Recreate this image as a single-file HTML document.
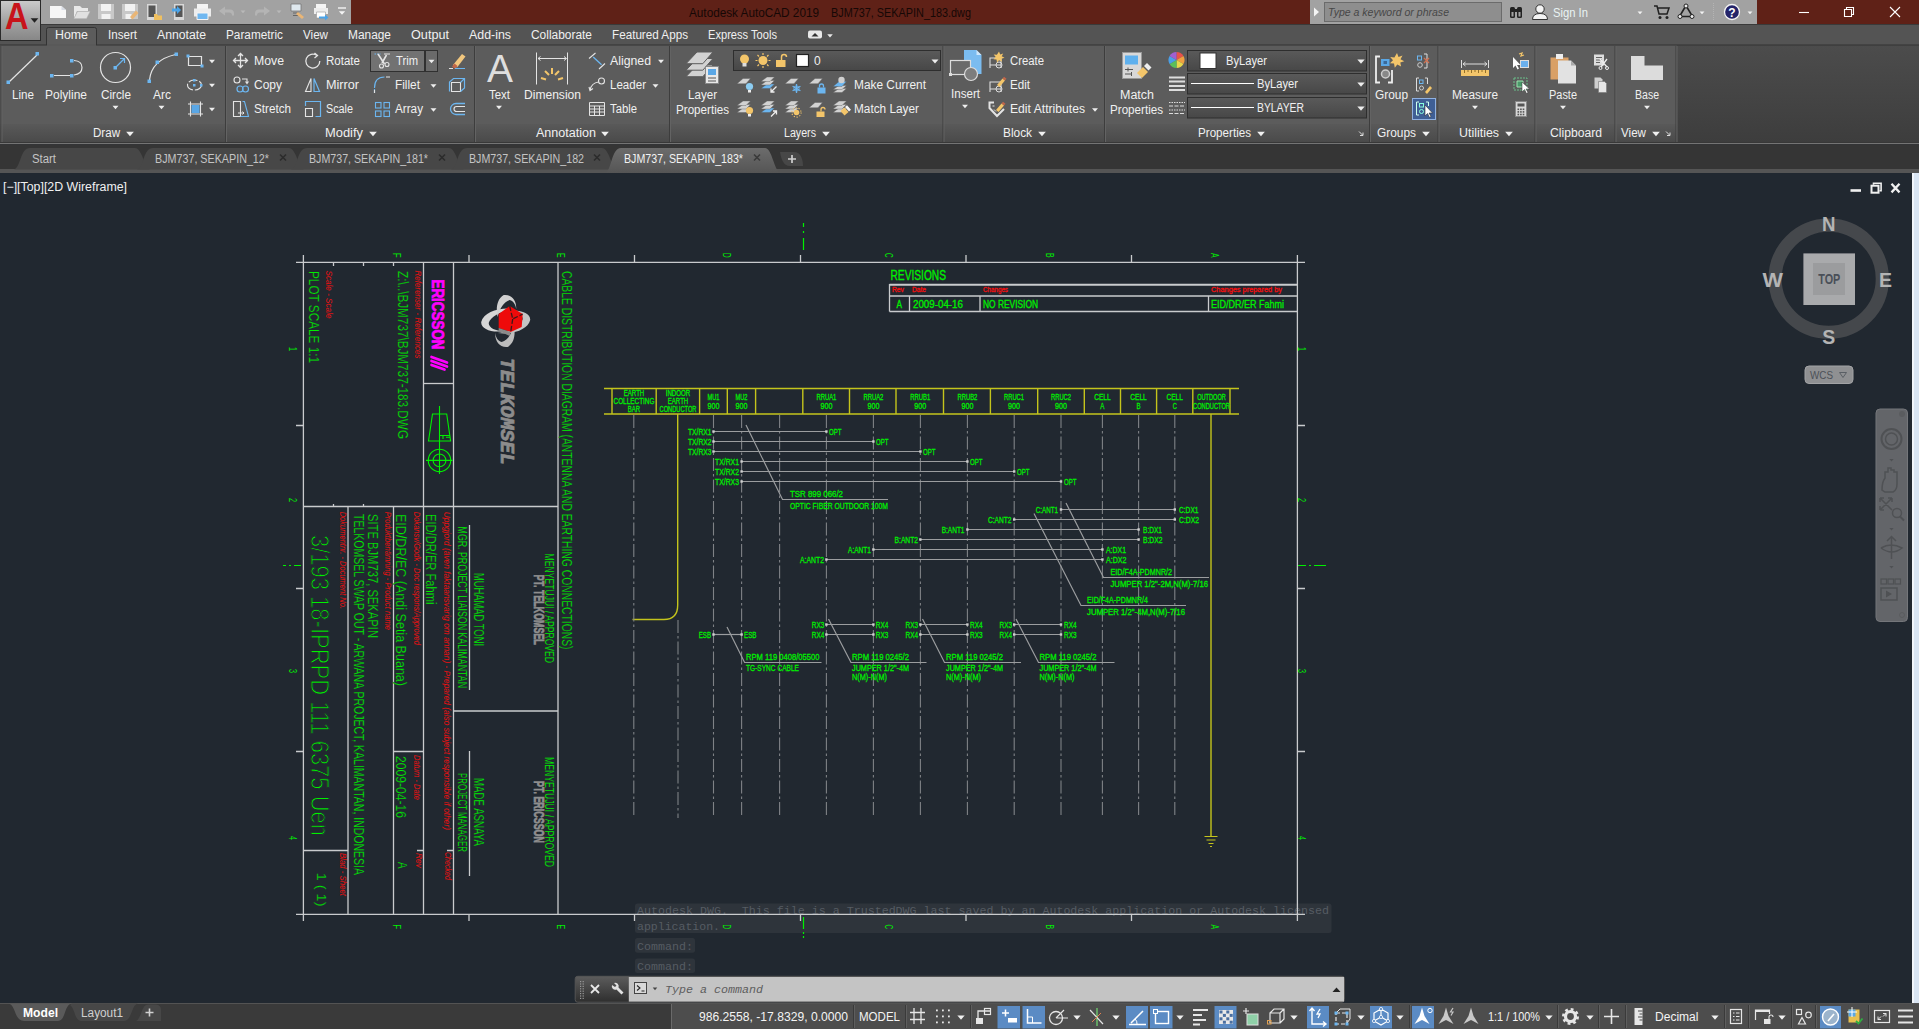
<!DOCTYPE html>
<html lang="en"><head><meta charset="utf-8"><title>Autodesk AutoCAD 2019 - BJM737, SEKAPIN_183.dwg</title>
<style>
html,body{margin:0;padding:0;}
body{width:1919px;height:1029px;overflow:hidden;background:#212830;position:relative;font-family:"Liberation Sans",Arial,sans-serif;}
#top,#view,#status{position:absolute;left:0;}
#top{top:0;width:1919px;height:173px;}
#view{top:173px;width:1919px;height:830px;background:#212830;}
#status{top:1002px;width:1919px;height:27px;}
#scroll{position:absolute;left:1912px;top:173px;width:7px;height:830px;background:#d9e5f3;border-left:2px solid #f2f6fb;box-sizing:border-box;}
svg{display:block;position:absolute;left:0;top:0;}
text{white-space:pre;}
</style></head><body>
<div id="view">
<svg width="1919" height="830" viewBox="0 173 1919 830">
<g font-family='"Liberation Mono","DejaVu Sans Mono",monospace'>
<rect x="635" y="903.5" width="696.5" height="29.5" fill="#2e343b" rx="2.5"/>
<rect x="635" y="938" width="60" height="14.7" fill="#2e343b" rx="2.5"/>
<rect x="635" y="958.5" width="60" height="14.5" fill="#2e343b" rx="2.5"/>
<text x="637" y="914" font-size="11.8" fill="#565c63" textLength="692" lengthAdjust="spacingAndGlyphs">Autodesk DWG.  This file is a TrustedDWG last saved by an Autodesk application or Autodesk licensed</text>
<text x="637" y="929.6" font-size="11.8" fill="#565c63" textLength="83" lengthAdjust="spacingAndGlyphs">application.</text>
<text x="637" y="949.7" font-size="11.8" fill="#565c63" textLength="56" lengthAdjust="spacingAndGlyphs">Command:</text>
<text x="637" y="969.9" font-size="11.8" fill="#565c63" textLength="56" lengthAdjust="spacingAndGlyphs">Command:</text>
</g>
<g font-family='"Liberation Sans","DejaVu Sans",sans-serif' shape-rendering="auto">
<g stroke="#c9cbcd" stroke-width="1.3" fill="none">
<path d="M296 262.4 H1305 M296 914.3 H1305 M303.4 255 V921 M1297.4 255 V921"/>
<path d="M469 255 V262.4 M469 914.3 V921"/>
<path d="M634.5 255 V262.4 M634.5 914.3 V921"/>
<path d="M800.5 255 V262.4 M800.5 914.3 V921"/>
<path d="M966 255 V262.4 M966 914.3 V921"/>
<path d="M1131.5 255 V262.4 M1131.5 914.3 V921"/>
<path d="M296 425.5 H303.4 M1297.4 425.5 H1305"/>
<path d="M296 588.5 H303.4 M1297.4 588.5 H1305"/>
<path d="M296 751.5 H303.4 M1297.4 751.5 H1305"/>
<path d="M423.5 262.4 V914.3 M453.5 262.4 V914.3 M558 262.4 V914.3"/>
<path d="M303.4 506.5 H558"/>
<path d="M423.5 383.5 H453.5"/>
<path d="M348 506.5 V914.3 M393.5 506.5 V914.3"/>
<path d="M453.5 711 H558 M393.5 751.5 H423.5 M303.4 850.5 H348 M417 850.5 H423.5 M447 850.5 H453.5"/>
<path d="M333.5 262.4 V266 M363.5 262.4 V266 M393.5 262.4 V266 M333.5 506.5 V504 M363.5 506.5 V504"/>
<path d="M469.5 525 V690 M469.5 751 V876"/>
<path d="M889.5 284.4 H1297.4 M889.5 285.2 H1297.4 M889.5 296 H1297.4 M889.5 311.5 H1297.4 M889.5 284 V311.5 M909.5 296 V311.5 M980 296 V311.5 M1208.5 296 V311.5"/>
</g>
<text font-size="11.5" fill="#00f000" textLength="4.6" lengthAdjust="spacingAndGlyphs" transform="translate(392.8,253) rotate(90)">F</text>
<text font-size="11.5" fill="#00f000" textLength="4.6" lengthAdjust="spacingAndGlyphs" transform="translate(392.8,924.5) rotate(90)">F</text>
<text font-size="11.5" fill="#00f000" textLength="4.6" lengthAdjust="spacingAndGlyphs" transform="translate(557.4,253) rotate(90)">E</text>
<text font-size="11.5" fill="#00f000" textLength="4.6" lengthAdjust="spacingAndGlyphs" transform="translate(557.4,924.5) rotate(90)">E</text>
<text font-size="11.5" fill="#00f000" textLength="4.6" lengthAdjust="spacingAndGlyphs" transform="translate(722.8,253) rotate(90)">D</text>
<text font-size="11.5" fill="#00f000" textLength="4.6" lengthAdjust="spacingAndGlyphs" transform="translate(722.8,924.5) rotate(90)">D</text>
<text font-size="11.5" fill="#00f000" textLength="4.6" lengthAdjust="spacingAndGlyphs" transform="translate(885.3,253) rotate(90)">C</text>
<text font-size="11.5" fill="#00f000" textLength="4.6" lengthAdjust="spacingAndGlyphs" transform="translate(885.3,924.5) rotate(90)">C</text>
<text font-size="11.5" fill="#00f000" textLength="4.6" lengthAdjust="spacingAndGlyphs" transform="translate(1046,253) rotate(90)">B</text>
<text font-size="11.5" fill="#00f000" textLength="4.6" lengthAdjust="spacingAndGlyphs" transform="translate(1046,924.5) rotate(90)">B</text>
<text font-size="11.5" fill="#00f000" textLength="4.6" lengthAdjust="spacingAndGlyphs" transform="translate(1210.5,253) rotate(90)">A</text>
<text font-size="11.5" fill="#00f000" textLength="4.6" lengthAdjust="spacingAndGlyphs" transform="translate(1210.5,924.5) rotate(90)">A</text>
<text font-size="11.5" fill="#00f000" textLength="4" lengthAdjust="spacingAndGlyphs" transform="translate(288.5,347) rotate(90)">1</text>
<text font-size="11.5" fill="#00f000" textLength="4" lengthAdjust="spacingAndGlyphs" transform="translate(1298,347) rotate(90)">1</text>
<text font-size="11.5" fill="#00f000" textLength="4" lengthAdjust="spacingAndGlyphs" transform="translate(288.5,498) rotate(90)">2</text>
<text font-size="11.5" fill="#00f000" textLength="4" lengthAdjust="spacingAndGlyphs" transform="translate(1298,498) rotate(90)">2</text>
<text font-size="11.5" fill="#00f000" textLength="4" lengthAdjust="spacingAndGlyphs" transform="translate(288.5,669) rotate(90)">3</text>
<text font-size="11.5" fill="#00f000" textLength="4" lengthAdjust="spacingAndGlyphs" transform="translate(1298,669) rotate(90)">3</text>
<text font-size="11.5" fill="#00f000" textLength="4" lengthAdjust="spacingAndGlyphs" transform="translate(288.5,836) rotate(90)">4</text>
<text font-size="11.5" fill="#00f000" textLength="4" lengthAdjust="spacingAndGlyphs" transform="translate(1298,836) rotate(90)">4</text>
<g stroke="#00f000" stroke-width="1.2">
<path d="M803.5 223 V227 M803.5 231 V233 M803.5 238 V250"/>
<path d="M803.5 917 V929 M803.5 932 V934 M803.5 936 V938"/>
<path d="M283 565.5 H286 M289 565.5 H291 M294 565.5 H301"/>
<path d="M1298 565.5 H1306 M1309 565.5 H1311 M1314 565.5 H1326"/>
</g>
<text font-size="14.5" fill="#00f000" textLength="92" lengthAdjust="spacingAndGlyphs" transform="translate(308.6,271) rotate(90)" stroke="#212830" stroke-width="0.25">PLOT SCALE 1:1</text>
<text font-size="9" fill="#f01010" textLength="48.0" lengthAdjust="spacingAndGlyphs" font-style="italic" transform="translate(326.2,270.5) rotate(90)">Scale - Scale</text>
<text font-size="14.5" fill="#00f000" textLength="168" lengthAdjust="spacingAndGlyphs" transform="translate(398.4,271) rotate(90)" stroke="#212830" stroke-width="0.25">Z:\..\BJM737\BJM737-183.DWG</text>
<text font-size="9" fill="#f01010" textLength="88.0" lengthAdjust="spacingAndGlyphs" font-style="italic" transform="translate(414.8,270.5) rotate(90)">Referenser - References</text>
<text font-size="16" fill="#ff00ff" textLength="70.0" lengthAdjust="spacingAndGlyphs" font-weight="bold" transform="translate(431.6,279.5) rotate(90)" stroke="#ff00ff" stroke-width="0.7">ERICSSON</text>
<g stroke="#ff00ff" stroke-width="2.7" stroke-linecap="round"><path d="M431.5 357 L447 362.5 M431.5 361 L447 366.5 M431.5 365 L444.5 369.5"/></g>
<g stroke="#00f000" stroke-width="1.1" fill="none">
<path d="M439.5 406 V474 M428.5 441 L432.5 414 H446.7 L450.6 441 Z M440 435.5 H449.5 M443 435.5 V439 M446 437.2 H449.5 M426 460.4 H452.5"/>
<circle cx="439.5" cy="460.4" r="11.2"/><circle cx="439.5" cy="460.4" r="6.4"/>
</g>
<g transform="translate(505.7,321)">
<path d="M-24.5 1 C-22 -9 -6 -14 8 -12 C-4 -10 -15 -5 -17 2 C-17 7 -10 10 -2 10 C-14 12 -25 8 -24.500 1 Z" fill="#d6d6d6"/>
<path d="M24.5 -1 C22 9 6 14 -8 12 C4 10 15 5 17 -2 C17 -7 10 -10 2 -10 C14 -12 25 -8 24.500 -1 Z" fill="#c4c4c4"/>
<path d="M-2 -26 C-9 -22 -10 -12 -8 -4 C-6 -13 -2 -19 4 -21 C8 -20 10 -16 10.500 -12 C11 -20 6 -27 -2 -26 Z" fill="#d0d0d0"/>
<path d="M2 26 C9 22 10 12 8 4 C6 13 2 19 -4 21 C-8 20 -10 16 -10.500 12 C-11 20 -6 27 2 26 Z" fill="#bdbdbd"/>
<path d="M-7 -7 L4 -15 L17 -7 L16 6 L5 11 L-7 7 Z" fill="#ee0a0a"/>
<path d="M-7 7 L5 11 L4 15 L-7 10 Z" fill="#8a8a8a"/>
<path d="M4 -15 L7 -2 L17 -7 M7 -2 L5 11" stroke="#3a1a1a" stroke-width="1.3" fill="none" stroke-dasharray="5 2"/>
</g>
<text font-size="20" fill="#8c8c8c" textLength="107" lengthAdjust="spacingAndGlyphs" font-weight="bold" font-style="italic" font-family='"Liberation Mono",monospace' transform="translate(500.6,358) rotate(90)" stroke="#8c8c8c" stroke-width="0.7">TELKOMSEL</text>
<text font-size="14.5" fill="#00f000" textLength="378.5" lengthAdjust="spacingAndGlyphs" transform="translate(561.6,271) rotate(90)" stroke="#212830" stroke-width="0.25">CABLE DISTRIBUTION DIAGRAM (ANTENNA AND EARTHING CONNECTIONS)</text>
<text font-size="25" fill="#00f000" textLength="301" lengthAdjust="spacingAndGlyphs" transform="translate(311.3,535) rotate(90)" stroke="#212830" stroke-width="1.0">3/193 18-IPRPD 111 6375 Uen</text>
<text font-size="9" fill="#f01010" textLength="97.3" lengthAdjust="spacingAndGlyphs" font-style="italic" transform="translate(340,511.7) rotate(90)">Dokumentnr. - Document No.</text>
<text font-size="14.5" fill="#00f000" textLength="361" lengthAdjust="spacingAndGlyphs" transform="translate(353.9,514) rotate(90)" stroke="#212830" stroke-width="0.25">TELKOMSEL SWAP OUT - ARWANA PROJECT, KALIMANTAN, INDONESIA</text>
<text font-size="14.5" fill="#00f000" textLength="124" lengthAdjust="spacingAndGlyphs" transform="translate(367.9,514) rotate(90)" stroke="#212830" stroke-width="0.25">SITE BJM737, SEKAPIN</text>
<text font-size="9" fill="#f01010" textLength="118.3" lengthAdjust="spacingAndGlyphs" font-style="italic" transform="translate(384.6,511.7) rotate(90)">Produktbenämning - Product name</text>
<text font-size="15" fill="#00f000" textLength="172" lengthAdjust="spacingAndGlyphs" transform="translate(395.5,514) rotate(90)" stroke="#212830" stroke-width="0.25">EID/DR/EC (Andi Setia Buana)</text>
<text font-size="9" fill="#f01010" textLength="133.3" lengthAdjust="spacingAndGlyphs" font-style="italic" transform="translate(414.4,511.7) rotate(90)">Dokansv/Godk - Doc respons/Approved</text>
<text font-size="15" fill="#00f000" textLength="90.5" lengthAdjust="spacingAndGlyphs" transform="translate(425.7,514) rotate(90)" stroke="#212830" stroke-width="0.25">EID/DR/ER Fahmi</text>
<text font-size="9" fill="#f01010" textLength="318.3" lengthAdjust="spacingAndGlyphs" font-style="italic" transform="translate(443.5,511.7) rotate(90)">Uppgjord (även faktaansvarig om annan) - Prepared (also subject responsible if other)</text>
<text font-size="12" fill="#00f000" textLength="161.4" lengthAdjust="spacingAndGlyphs" transform="translate(458.4,526.6) rotate(90)" stroke="#212830" stroke-width="0.15">MGR. PROJECT LIAISON KALIMANTAN</text>
<text font-size="14.2" fill="#00f000" textLength="73" lengthAdjust="spacingAndGlyphs" transform="translate(473.8,573) rotate(90)" stroke="#212830" stroke-width="0.25">MUHAMAD TONI</text>
<text font-size="12.7" fill="#00f000" textLength="109.4" lengthAdjust="spacingAndGlyphs" transform="translate(544.6,553.6) rotate(90)" stroke="#212830" stroke-width="0.15">MENYETUJUI / APPROVED</text>
<text font-size="14" fill="#8e8e8e" textLength="70.1" lengthAdjust="spacingAndGlyphs" font-weight="bold" transform="translate(533.8,574.7) rotate(90)" stroke="#8e8e8e" stroke-width="0.7">PT. TELKOMSEL</text>
<text font-size="9" fill="#f01010" textLength="45" lengthAdjust="spacingAndGlyphs" font-style="italic" transform="translate(414.4,755) rotate(90)">Datum - Date</text>
<text font-size="15" fill="#00f000" textLength="62" lengthAdjust="spacingAndGlyphs" transform="translate(395.5,756) rotate(90)" stroke="#212830" stroke-width="0.25">2009-04-16</text>
<text font-size="9" fill="#f01010" textLength="15" lengthAdjust="spacingAndGlyphs" font-style="italic" transform="translate(416,853) rotate(90)">Rev</text>
<text font-size="13" fill="#00f000" textLength="6.5" lengthAdjust="spacingAndGlyphs" transform="translate(397.5,862) rotate(90)" stroke="#212830" stroke-width="0.25">A</text>
<text font-size="9" fill="#f01010" textLength="28" lengthAdjust="spacingAndGlyphs" font-style="italic" transform="translate(445,852) rotate(90)">Checked</text>
<text font-size="9" fill="#f01010" textLength="43" lengthAdjust="spacingAndGlyphs" font-style="italic" transform="translate(340,853) rotate(90)">Blad - Sheet</text>
<text font-size="13.5" fill="#00f000" textLength="33.8" lengthAdjust="spacingAndGlyphs" transform="translate(316.5,872.7) rotate(90)" stroke="#212830" stroke-width="0.25">1 ( 1)</text>
<text font-size="12" fill="#00f000" textLength="79" lengthAdjust="spacingAndGlyphs" transform="translate(458.4,773) rotate(90)" stroke="#212830" stroke-width="0.15">PROJECT MANAGER</text>
<text font-size="14.2" fill="#00f000" textLength="68" lengthAdjust="spacingAndGlyphs" transform="translate(473.8,778) rotate(90)" stroke="#212830" stroke-width="0.25">MADE ASNAYA</text>
<text font-size="12.7" fill="#00f000" textLength="110" lengthAdjust="spacingAndGlyphs" transform="translate(544.6,757) rotate(90)" stroke="#212830" stroke-width="0.15">MENYETUJUI / APPROVED</text>
<text font-size="14" fill="#8e8e8e" textLength="62" lengthAdjust="spacingAndGlyphs" font-weight="bold" transform="translate(533.8,781) rotate(90)" stroke="#8e8e8e" stroke-width="0.7">PT. ERICSSON</text>
<text x="890.5" y="280.01" font-size="14" fill="#00f000" textLength="55.5" lengthAdjust="spacingAndGlyphs" stroke="#00f000" stroke-width="0.3">REVISIONS</text>
<text x="892" y="292.41" font-size="7" fill="#f01010" textLength="12" lengthAdjust="spacingAndGlyphs" stroke="#f01010" stroke-width="0.3">Rev</text>
<text x="912" y="292.41" font-size="7" fill="#f01010" textLength="14" lengthAdjust="spacingAndGlyphs" stroke="#f01010" stroke-width="0.3">Date</text>
<text x="983" y="292.41" font-size="7" fill="#f01010" textLength="25" lengthAdjust="spacingAndGlyphs" stroke="#f01010" stroke-width="0.3">Changes</text>
<text x="1211" y="292.41" font-size="7" fill="#f01010" textLength="71" lengthAdjust="spacingAndGlyphs" stroke="#f01010" stroke-width="0.3">Changes prepared by</text>
<text x="896.5" y="307.94" font-size="11" fill="#00f000" textLength="5.5" lengthAdjust="spacingAndGlyphs" stroke="#00f000" stroke-width="0.3">A</text>
<text x="913" y="307.94" font-size="11" fill="#00f000" textLength="50" lengthAdjust="spacingAndGlyphs" stroke="#00f000" stroke-width="0.3">2009-04-16</text>
<text x="983" y="307.94" font-size="11" fill="#00f000" textLength="55" lengthAdjust="spacingAndGlyphs" stroke="#00f000" stroke-width="0.3">NO REVISION</text>
<text x="1211" y="307.94" font-size="11" fill="#00f000" textLength="73" lengthAdjust="spacingAndGlyphs" stroke="#00f000" stroke-width="0.3">EID/DR/ER Fahmi</text>
<g stroke="#c4c41c" stroke-width="1.4" fill="none">
<path d="M604 388.5 H1239 M604 414 H1239"/>
<path d="M612 388.5 V414 M656.2 388.5 V414 M699.6 388.5 V414 M727.3 388.5 V414 M755.6 388.5 V414 M802.8 388.5 V414 M849.5 388.5 V414 M896 388.5 V414 M943.5 388.5 V414 M990.4 388.5 V414 M1037.7 388.5 V414 M1084.3 388.5 V414 M1120.5 388.5 V414 M1156.6 388.5 V414 M1192.8 388.5 V414 M1230 388.5 V414"/>
<path d="M1211 414 V836"/>
<path d="M677.7 414 V605 Q677.7 619.5 664 619.5 H632.5"/>
<path d="M1204.5 836.5 H1217.5 M1206.5 840 H1215.5 M1208.5 843.5 H1213.5 M1210 846.5 H1212" stroke-width="1.2"/>
</g>
<text x="623.75" y="395.72" font-size="9" fill="#00f000" textLength="20.5" lengthAdjust="spacingAndGlyphs" stroke="#00f000" stroke-width="0.3">EARTH</text>
<text x="613.5" y="403.72" font-size="9" fill="#00f000" textLength="41.0" lengthAdjust="spacingAndGlyphs" stroke="#00f000" stroke-width="0.3">COLLECTING</text>
<text x="627.85" y="411.72" font-size="9" fill="#00f000" textLength="12.3" lengthAdjust="spacingAndGlyphs" stroke="#00f000" stroke-width="0.3">BAR</text>
<text x="665.7" y="395.72" font-size="9" fill="#00f000" textLength="24.6" lengthAdjust="spacingAndGlyphs" stroke="#00f000" stroke-width="0.3">INDOOR</text>
<text x="667.75" y="403.72" font-size="9" fill="#00f000" textLength="20.5" lengthAdjust="spacingAndGlyphs" stroke="#00f000" stroke-width="0.3">EARTH</text>
<text x="659.55" y="411.72" font-size="9" fill="#00f000" textLength="36.9" lengthAdjust="spacingAndGlyphs" stroke="#00f000" stroke-width="0.3">CONDUCTOR</text>
<text x="707.5" y="400.22" font-size="9" fill="#00f000" textLength="12.0" lengthAdjust="spacingAndGlyphs" stroke="#00f000" stroke-width="0.3">MU1</text>
<text x="707.5" y="408.72" font-size="9" fill="#00f000" textLength="12.0" lengthAdjust="spacingAndGlyphs" stroke="#00f000" stroke-width="0.3">900</text>
<text x="735.5" y="400.22" font-size="9" fill="#00f000" textLength="12.0" lengthAdjust="spacingAndGlyphs" stroke="#00f000" stroke-width="0.3">MU2</text>
<text x="735.5" y="408.72" font-size="9" fill="#00f000" textLength="12.0" lengthAdjust="spacingAndGlyphs" stroke="#00f000" stroke-width="0.3">900</text>
<text x="816.4" y="400.22" font-size="9" fill="#00f000" textLength="20.0" lengthAdjust="spacingAndGlyphs" stroke="#00f000" stroke-width="0.3">RRUA1</text>
<text x="820.4" y="408.72" font-size="9" fill="#00f000" textLength="12.0" lengthAdjust="spacingAndGlyphs" stroke="#00f000" stroke-width="0.3">900</text>
<text x="863.4" y="400.22" font-size="9" fill="#00f000" textLength="20.0" lengthAdjust="spacingAndGlyphs" stroke="#00f000" stroke-width="0.3">RRUA2</text>
<text x="867.4" y="408.72" font-size="9" fill="#00f000" textLength="12.0" lengthAdjust="spacingAndGlyphs" stroke="#00f000" stroke-width="0.3">900</text>
<text x="910.3" y="400.22" font-size="9" fill="#00f000" textLength="20.0" lengthAdjust="spacingAndGlyphs" stroke="#00f000" stroke-width="0.3">RRUB1</text>
<text x="914.3" y="408.72" font-size="9" fill="#00f000" textLength="12.0" lengthAdjust="spacingAndGlyphs" stroke="#00f000" stroke-width="0.3">900</text>
<text x="957.4" y="400.22" font-size="9" fill="#00f000" textLength="20.0" lengthAdjust="spacingAndGlyphs" stroke="#00f000" stroke-width="0.3">RRUB2</text>
<text x="961.4" y="408.72" font-size="9" fill="#00f000" textLength="12.0" lengthAdjust="spacingAndGlyphs" stroke="#00f000" stroke-width="0.3">900</text>
<text x="1004.0" y="400.22" font-size="9" fill="#00f000" textLength="20.0" lengthAdjust="spacingAndGlyphs" stroke="#00f000" stroke-width="0.3">RRUC1</text>
<text x="1008.0" y="408.72" font-size="9" fill="#00f000" textLength="12.0" lengthAdjust="spacingAndGlyphs" stroke="#00f000" stroke-width="0.3">900</text>
<text x="1051.0" y="400.22" font-size="9" fill="#00f000" textLength="20.0" lengthAdjust="spacingAndGlyphs" stroke="#00f000" stroke-width="0.3">RRUC2</text>
<text x="1055.0" y="408.72" font-size="9" fill="#00f000" textLength="12.0" lengthAdjust="spacingAndGlyphs" stroke="#00f000" stroke-width="0.3">900</text>
<text x="1094.2" y="400.4" font-size="9.5" fill="#00f000" textLength="16.4" lengthAdjust="spacingAndGlyphs" stroke="#00f000" stroke-width="0.3">CELL</text>
<text x="1100.35" y="408.9" font-size="9.5" fill="#00f000" textLength="4.1" lengthAdjust="spacingAndGlyphs" stroke="#00f000" stroke-width="0.3">A</text>
<text x="1130.3" y="400.4" font-size="9.5" fill="#00f000" textLength="16.4" lengthAdjust="spacingAndGlyphs" stroke="#00f000" stroke-width="0.3">CELL</text>
<text x="1136.45" y="408.9" font-size="9.5" fill="#00f000" textLength="4.1" lengthAdjust="spacingAndGlyphs" stroke="#00f000" stroke-width="0.3">B</text>
<text x="1166.5" y="400.4" font-size="9.5" fill="#00f000" textLength="16.4" lengthAdjust="spacingAndGlyphs" stroke="#00f000" stroke-width="0.3">CELL</text>
<text x="1172.65" y="408.9" font-size="9.5" fill="#00f000" textLength="4.1" lengthAdjust="spacingAndGlyphs" stroke="#00f000" stroke-width="0.3">C</text>
<text x="1197.15" y="400.22" font-size="9" fill="#00f000" textLength="28.7" lengthAdjust="spacingAndGlyphs" stroke="#00f000" stroke-width="0.3">OUTDOOR</text>
<text x="1193.05" y="408.72" font-size="9" fill="#00f000" textLength="36.9" lengthAdjust="spacingAndGlyphs" stroke="#00f000" stroke-width="0.3">CONDUCTOR</text>
<g stroke="#7f8286" stroke-width="1.1" stroke-dasharray="13 3 2.5 3" fill="none">
<path d="M633.8 415 V818"/>
<path d="M678 620 V818"/>
<path d="M713.5 415 V818"/>
<path d="M741.6 415 V818"/>
<path d="M779.6 415 V818"/>
<path d="M826.4 415 V818"/>
<path d="M873.4 415 V818"/>
<path d="M920.4 415 V818"/>
<path d="M967.4 415 V818"/>
<path d="M1014.2 415 V818"/>
<path d="M1061 415 V818"/>
<path d="M1102.4 415 V818"/>
<path d="M1138.6 415 V818"/>
<path d="M1174.8 415 V818"/>
</g>
<g stroke="#9b9d9f" stroke-width="1.2" fill="none">
<path d="M713.5 431.5 H826.4"/>
<path d="M713.5 441.5 H873.4"/>
<path d="M713.5 451.5 H920.4"/>
<path d="M741.6 461.5 H967.4"/>
<path d="M741.6 471.5 H1014.2"/>
<path d="M741.6 481.5 H1061"/>
<path d="M1061 509.5 H1174.8"/>
<path d="M1014.2 519.5 H1174.8"/>
<path d="M967.4 529.5 H1138.6"/>
<path d="M920.4 539.5 H1138.6"/>
<path d="M873.4 549.5 H1102.4"/>
<path d="M826.4 559.5 H1102.4"/>
<path d="M826.4 624.5 H873.4"/>
<path d="M826.4 634.5 H873.4"/>
<path d="M920.4 624.5 H967.4"/>
<path d="M920.4 634.5 H967.4"/>
<path d="M1014.2 624.5 H1061"/>
<path d="M1014.2 634.5 H1061"/>
<path d="M713.5 634.5 H741.6"/>
<path d="M746 425 L782.5 499.5 H888"/>
<path d="M1066 503 L1103.5 577.5 H1209"/>
<path d="M1034 513.5 L1081 605.5 H1186"/>
<path d="M727 627 L744.6 662.5 H821.5"/>
<path d="M828.5 619 L851 662.5 H926.5"/>
<path d="M922.5 619 L944.5 662.5 H1021"/>
<path d="M1016 619 L1038.5 662.5 H1114.5"/>
</g>
<g fill="#d0d0d0">
<rect x="712.3" y="430.3" width="2.4" height="2.4"/><rect x="825.1999999999999" y="430.3" width="2.4" height="2.4"/>
<rect x="712.3" y="440.3" width="2.4" height="2.4"/><rect x="872.1999999999999" y="440.3" width="2.4" height="2.4"/>
<rect x="712.3" y="450.3" width="2.4" height="2.4"/><rect x="919.1999999999999" y="450.3" width="2.4" height="2.4"/>
<rect x="740.4" y="460.3" width="2.4" height="2.4"/><rect x="966.1999999999999" y="460.3" width="2.4" height="2.4"/>
<rect x="740.4" y="470.3" width="2.4" height="2.4"/><rect x="1013.0" y="470.3" width="2.4" height="2.4"/>
<rect x="740.4" y="480.3" width="2.4" height="2.4"/><rect x="1059.8" y="480.3" width="2.4" height="2.4"/>
<rect x="1059.8" y="508.3" width="2.4" height="2.4"/><rect x="1173.6" y="508.3" width="2.4" height="2.4"/>
<rect x="1013.0" y="518.3" width="2.4" height="2.4"/><rect x="1173.6" y="518.3" width="2.4" height="2.4"/>
<rect x="966.1999999999999" y="528.3" width="2.4" height="2.4"/><rect x="1137.3999999999999" y="528.3" width="2.4" height="2.4"/>
<rect x="919.1999999999999" y="538.3" width="2.4" height="2.4"/><rect x="1137.3999999999999" y="538.3" width="2.4" height="2.4"/>
<rect x="872.1999999999999" y="548.3" width="2.4" height="2.4"/><rect x="1101.2" y="548.3" width="2.4" height="2.4"/>
<rect x="825.1999999999999" y="558.3" width="2.4" height="2.4"/><rect x="1101.2" y="558.3" width="2.4" height="2.4"/>
<rect x="825.1999999999999" y="623.3" width="2.4" height="2.4"/><rect x="872.1999999999999" y="623.3" width="2.4" height="2.4"/>
<rect x="825.1999999999999" y="633.3" width="2.4" height="2.4"/><rect x="872.1999999999999" y="633.3" width="2.4" height="2.4"/>
<rect x="919.1999999999999" y="623.3" width="2.4" height="2.4"/><rect x="966.1999999999999" y="623.3" width="2.4" height="2.4"/>
<rect x="919.1999999999999" y="633.3" width="2.4" height="2.4"/><rect x="966.1999999999999" y="633.3" width="2.4" height="2.4"/>
<rect x="1013.0" y="623.3" width="2.4" height="2.4"/><rect x="1059.8" y="623.3" width="2.4" height="2.4"/>
<rect x="1013.0" y="633.3" width="2.4" height="2.4"/><rect x="1059.8" y="633.3" width="2.4" height="2.4"/>
<rect x="712.3" y="633.3" width="2.4" height="2.4"/><rect x="740.4" y="633.3" width="2.4" height="2.4"/>
</g>
<text x="688" y="434.94" font-size="9.6" fill="#00f000" textLength="23.5" lengthAdjust="spacingAndGlyphs" stroke="#00f000" stroke-width="0.3">TX/RX1</text>
<text x="688" y="444.94" font-size="9.6" fill="#00f000" textLength="23.5" lengthAdjust="spacingAndGlyphs" stroke="#00f000" stroke-width="0.3">TX/RX2</text>
<text x="688" y="454.94" font-size="9.6" fill="#00f000" textLength="23.5" lengthAdjust="spacingAndGlyphs" stroke="#00f000" stroke-width="0.3">TX/RX3</text>
<text x="715" y="464.94" font-size="9.6" fill="#00f000" textLength="24" lengthAdjust="spacingAndGlyphs" stroke="#00f000" stroke-width="0.3">TX/RX1</text>
<text x="715" y="474.94" font-size="9.6" fill="#00f000" textLength="24" lengthAdjust="spacingAndGlyphs" stroke="#00f000" stroke-width="0.3">TX/RX2</text>
<text x="715" y="484.94" font-size="9.6" fill="#00f000" textLength="24" lengthAdjust="spacingAndGlyphs" stroke="#00f000" stroke-width="0.3">TX/RX3</text>
<text x="829" y="434.94" font-size="9.6" fill="#00f000" textLength="12.5" lengthAdjust="spacingAndGlyphs" stroke="#00f000" stroke-width="0.3">OPT</text>
<text x="876" y="444.94" font-size="9.6" fill="#00f000" textLength="12.5" lengthAdjust="spacingAndGlyphs" stroke="#00f000" stroke-width="0.3">OPT</text>
<text x="923" y="454.94" font-size="9.6" fill="#00f000" textLength="12.5" lengthAdjust="spacingAndGlyphs" stroke="#00f000" stroke-width="0.3">OPT</text>
<text x="970" y="464.94" font-size="9.6" fill="#00f000" textLength="12.5" lengthAdjust="spacingAndGlyphs" stroke="#00f000" stroke-width="0.3">OPT</text>
<text x="1017" y="474.94" font-size="9.6" fill="#00f000" textLength="12.5" lengthAdjust="spacingAndGlyphs" stroke="#00f000" stroke-width="0.3">OPT</text>
<text x="1064" y="484.94" font-size="9.6" fill="#00f000" textLength="12.5" lengthAdjust="spacingAndGlyphs" stroke="#00f000" stroke-width="0.3">OPT</text>
<text x="790" y="497.44" font-size="9.6" fill="#00f000" textLength="53" lengthAdjust="spacingAndGlyphs" stroke="#00f000" stroke-width="0.3">TSR 899 066/2</text>
<text x="790" y="508.64" font-size="9.6" fill="#00f000" textLength="98" lengthAdjust="spacingAndGlyphs" stroke="#00f000" stroke-width="0.3">OPTIC FIBER OUTDOOR 100M</text>
<text x="1035.8" y="512.94" font-size="9.6" fill="#00f000" textLength="22.2" lengthAdjust="spacingAndGlyphs" stroke="#00f000" stroke-width="0.3">C:ANT1</text>
<text x="1179" y="512.94" font-size="9.6" fill="#00f000" textLength="19.5" lengthAdjust="spacingAndGlyphs" stroke="#00f000" stroke-width="0.3">C:DX1</text>
<text x="988" y="522.94" font-size="9.6" fill="#00f000" textLength="23.5" lengthAdjust="spacingAndGlyphs" stroke="#00f000" stroke-width="0.3">C:ANT2</text>
<text x="1179" y="522.94" font-size="9.6" fill="#00f000" textLength="20" lengthAdjust="spacingAndGlyphs" stroke="#00f000" stroke-width="0.3">C:DX2</text>
<text x="941.7" y="532.94" font-size="9.6" fill="#00f000" textLength="22.8" lengthAdjust="spacingAndGlyphs" stroke="#00f000" stroke-width="0.3">B:ANT1</text>
<text x="1143" y="532.94" font-size="9.6" fill="#00f000" textLength="19" lengthAdjust="spacingAndGlyphs" stroke="#00f000" stroke-width="0.3">B:DX1</text>
<text x="894.6" y="542.94" font-size="9.6" fill="#00f000" textLength="23.4" lengthAdjust="spacingAndGlyphs" stroke="#00f000" stroke-width="0.3">B:ANT2</text>
<text x="1143" y="542.94" font-size="9.6" fill="#00f000" textLength="19.5" lengthAdjust="spacingAndGlyphs" stroke="#00f000" stroke-width="0.3">B:DX2</text>
<text x="848" y="552.94" font-size="9.6" fill="#00f000" textLength="23" lengthAdjust="spacingAndGlyphs" stroke="#00f000" stroke-width="0.3">A:ANT1</text>
<text x="1106" y="552.94" font-size="9.6" fill="#00f000" textLength="20" lengthAdjust="spacingAndGlyphs" stroke="#00f000" stroke-width="0.3">A:DX1</text>
<text x="800" y="562.94" font-size="9.6" fill="#00f000" textLength="24" lengthAdjust="spacingAndGlyphs" stroke="#00f000" stroke-width="0.3">A:ANT2</text>
<text x="1106" y="562.94" font-size="9.6" fill="#00f000" textLength="20.5" lengthAdjust="spacingAndGlyphs" stroke="#00f000" stroke-width="0.3">A:DX2</text>
<text x="1110.5" y="575.44" font-size="9.6" fill="#00f000" textLength="61.5" lengthAdjust="spacingAndGlyphs" stroke="#00f000" stroke-width="0.3">EID/F4A-PDMNR/2</text>
<text x="1110.5" y="586.64" font-size="9.6" fill="#00f000" textLength="97.5" lengthAdjust="spacingAndGlyphs" stroke="#00f000" stroke-width="0.3">JUMPER 1/2"-2M,N(M)-7/16</text>
<text x="1087" y="603.44" font-size="9.6" fill="#00f000" textLength="61" lengthAdjust="spacingAndGlyphs" stroke="#00f000" stroke-width="0.3">EID/F4A-PDMNR/4</text>
<text x="1087" y="614.64" font-size="9.6" fill="#00f000" textLength="98" lengthAdjust="spacingAndGlyphs" stroke="#00f000" stroke-width="0.3">JUMPER 1/2"-4M,N(M)-7/16</text>
<text x="811.8" y="627.94" font-size="9.6" fill="#00f000" textLength="12.5" lengthAdjust="spacingAndGlyphs" stroke="#00f000" stroke-width="0.3">RX3</text>
<text x="875.8" y="627.94" font-size="9.6" fill="#00f000" textLength="12.5" lengthAdjust="spacingAndGlyphs" stroke="#00f000" stroke-width="0.3">RX4</text>
<text x="811.8" y="637.94" font-size="9.6" fill="#00f000" textLength="12.5" lengthAdjust="spacingAndGlyphs" stroke="#00f000" stroke-width="0.3">RX4</text>
<text x="875.8" y="637.94" font-size="9.6" fill="#00f000" textLength="12.5" lengthAdjust="spacingAndGlyphs" stroke="#00f000" stroke-width="0.3">RX3</text>
<text x="905.6" y="627.94" font-size="9.6" fill="#00f000" textLength="12.5" lengthAdjust="spacingAndGlyphs" stroke="#00f000" stroke-width="0.3">RX3</text>
<text x="970" y="627.94" font-size="9.6" fill="#00f000" textLength="12.5" lengthAdjust="spacingAndGlyphs" stroke="#00f000" stroke-width="0.3">RX4</text>
<text x="905.6" y="637.94" font-size="9.6" fill="#00f000" textLength="12.5" lengthAdjust="spacingAndGlyphs" stroke="#00f000" stroke-width="0.3">RX4</text>
<text x="970" y="637.94" font-size="9.6" fill="#00f000" textLength="12.5" lengthAdjust="spacingAndGlyphs" stroke="#00f000" stroke-width="0.3">RX3</text>
<text x="999.6" y="627.94" font-size="9.6" fill="#00f000" textLength="12.5" lengthAdjust="spacingAndGlyphs" stroke="#00f000" stroke-width="0.3">RX3</text>
<text x="1064" y="627.94" font-size="9.6" fill="#00f000" textLength="12.5" lengthAdjust="spacingAndGlyphs" stroke="#00f000" stroke-width="0.3">RX4</text>
<text x="999.6" y="637.94" font-size="9.6" fill="#00f000" textLength="12.5" lengthAdjust="spacingAndGlyphs" stroke="#00f000" stroke-width="0.3">RX4</text>
<text x="1064" y="637.94" font-size="9.6" fill="#00f000" textLength="12.5" lengthAdjust="spacingAndGlyphs" stroke="#00f000" stroke-width="0.3">RX3</text>
<text x="698.7" y="637.94" font-size="9.6" fill="#00f000" textLength="12.3" lengthAdjust="spacingAndGlyphs" stroke="#00f000" stroke-width="0.3">ESB</text>
<text x="744" y="637.94" font-size="9.6" fill="#00f000" textLength="12.5" lengthAdjust="spacingAndGlyphs" stroke="#00f000" stroke-width="0.3">ESB</text>
<text x="746" y="660.44" font-size="9.6" fill="#00f000" textLength="73.5" lengthAdjust="spacingAndGlyphs" stroke="#00f000" stroke-width="0.3">RPM 119 0408/05500</text>
<text x="746" y="671.44" font-size="9.6" fill="#00f000" textLength="53" lengthAdjust="spacingAndGlyphs" stroke="#00f000" stroke-width="0.3">TG-SYNC CABLE</text>
<text x="852" y="660.44" font-size="9.6" fill="#00f000" textLength="57" lengthAdjust="spacingAndGlyphs" stroke="#00f000" stroke-width="0.3">RPM 119 0245/2</text>
<text x="852" y="671.44" font-size="9.6" fill="#00f000" textLength="57" lengthAdjust="spacingAndGlyphs" stroke="#00f000" stroke-width="0.3">JUMPER 1/2"-4M</text>
<text x="852" y="680.24" font-size="9.6" fill="#00f000" textLength="35" lengthAdjust="spacingAndGlyphs" stroke="#00f000" stroke-width="0.3">N(M)-N(M)</text>
<text x="946" y="660.44" font-size="9.6" fill="#00f000" textLength="57" lengthAdjust="spacingAndGlyphs" stroke="#00f000" stroke-width="0.3">RPM 119 0245/2</text>
<text x="946" y="671.44" font-size="9.6" fill="#00f000" textLength="57" lengthAdjust="spacingAndGlyphs" stroke="#00f000" stroke-width="0.3">JUMPER 1/2"-4M</text>
<text x="946" y="680.24" font-size="9.6" fill="#00f000" textLength="35" lengthAdjust="spacingAndGlyphs" stroke="#00f000" stroke-width="0.3">N(M)-N(M)</text>
<text x="1039.5" y="660.44" font-size="9.6" fill="#00f000" textLength="57.0" lengthAdjust="spacingAndGlyphs" stroke="#00f000" stroke-width="0.3">RPM 119 0245/2</text>
<text x="1039.5" y="671.44" font-size="9.6" fill="#00f000" textLength="57.0" lengthAdjust="spacingAndGlyphs" stroke="#00f000" stroke-width="0.3">JUMPER 1/2"-4M</text>
<text x="1039.5" y="680.24" font-size="9.6" fill="#00f000" textLength="35.0" lengthAdjust="spacingAndGlyphs" stroke="#00f000" stroke-width="0.3">N(M)-N(M)</text>
</g>
<g font-family='"Liberation Sans",Arial,sans-serif'>
<text x="3" y="191" font-size="12" fill="#f0f0f0" textLength="124" lengthAdjust="spacingAndGlyphs">[−][Top][2D Wireframe]</text>
<rect x="1850.5" y="189.2" width="10.5" height="2.6" fill="#f0f0f0"/>
<path d="M1873.500 184.800 v-1.600 h7.600 v7.600 h-1.600" stroke="#f0f0f0" stroke-width="1.600" fill="none"/>
<rect x="1871.5" y="185.7" width="7" height="7" fill="none" stroke="#f0f0f0" stroke-width="2"/>
<path d="M1891.500 183.800 l8 8.600 M1899.500 183.800 l-8 8.600" stroke="#f0f0f0" stroke-width="2.300"/>
<circle cx="1828.7" cy="278.7" r="53.6" fill="none" stroke="#45484c" stroke-width="13.2"/>
<rect x="1803.4" y="253.4" width="51.6" height="51.6" fill="#a9aaac"/>
<rect x="1813" y="263" width="32" height="32" fill="#9b9c9e"/>
<text x="1829.3" y="284" font-size="14" fill="#4a4f58" textLength="22" lengthAdjust="spacingAndGlyphs" text-anchor="middle" font-weight="bold">TOP</text>
<text x="1828.7" y="230.7" font-size="21" fill="#b4b4b4" textLength="13.5" lengthAdjust="spacingAndGlyphs" text-anchor="middle" font-weight="bold">N</text>
<text x="1828.7" y="343.7" font-size="21" fill="#b4b4b4" textLength="13" lengthAdjust="spacingAndGlyphs" text-anchor="middle" font-weight="bold">S</text>
<text x="1772.8" y="287" font-size="21" fill="#b4b4b4" textLength="20.5" lengthAdjust="spacingAndGlyphs" text-anchor="middle" font-weight="bold">W</text>
<text x="1885.5" y="287" font-size="21" fill="#b4b4b4" textLength="13" lengthAdjust="spacingAndGlyphs" text-anchor="middle" font-weight="bold">E</text>
<rect x="1805" y="366" width="48" height="17.5" fill="#8f9092" stroke="#a2a3a5" stroke-width="1" rx="4"/>
<text x="1810" y="379" font-size="11" fill="#4c5158" textLength="23" lengthAdjust="spacingAndGlyphs">WCS</text>
<path d="M1839.500 372.500 h7 l-3.500 5 z" fill="none" stroke="#5a5f65" stroke-width="1"/>
<rect x="1876" y="409" width="31.5" height="212.5" fill="#636569" stroke="#74767a" stroke-width="1" rx="4"/>
<circle cx="1891.500" cy="439" r="10" fill="none" stroke="#4f5154" stroke-width="2"/><circle cx="1891.500" cy="439" r="6" fill="none" stroke="#4f5154" stroke-width="1.500"/>
<path d="M1889.4 459.1 h4.2 l-2.1 2.4 z" fill="#4f5154"/>
<path d="M1882 490 q0 -8 3 -12 v-6 h3 v-4 h3 v2 h3 v2 h3 v12 q0 6 -4 8 h-8 z" fill="none" stroke="#4f5154" stroke-width="1.500"/>
<path d="M1880 498 l12 12 M1892 498 l-12 12 M1880 498 h4 M1880 498 v4 M1892 498 h-4 M1892 498 v4 M1880 510 h4 M1880 510 v-4" stroke="#4f5154" stroke-width="1.500" fill="none"/><circle cx="1897" cy="513" r="4.500" fill="none" stroke="#4f5154" stroke-width="1.500"/><path d="M1900 516.500 l4 4" stroke="#4f5154" stroke-width="2"/>
<path d="M1889.4 528.1 h4.2 l-2.1 2.4 z" fill="#4f5154"/>
<path d="M1891.500 537 v22 M1887 541 l4.500 -4.500 l4.500 4.500 M1881 548 q10 -6 21 0 q-10 8 -21 0" fill="none" stroke="#4f5154" stroke-width="1.500"/>
<path d="M1889.4 566.1 h4.2 l-2.1 2.4 z" fill="#4f5154"/>
<rect x="1881" y="579" width="5.5" height="5" fill="none" stroke="#4f5154" stroke-width="1.2"/>
<rect x="1888" y="579" width="5.5" height="5" fill="none" stroke="#4f5154" stroke-width="1.2"/>
<rect x="1895" y="579" width="5.5" height="5" fill="none" stroke="#4f5154" stroke-width="1.2"/>
<rect x="1881" y="588" width="16" height="12" fill="none" stroke="#4f5154" stroke-width="1.5"/>
<path d="M1886 590.500 v7 l6 -3.500 z" fill="#4f5154"/>
<circle cx="1902" cy="414" r="3" fill="#5a5c5f"/><circle cx="1902" cy="615" r="2.500" fill="none" stroke="#5a5c5f"/>
</g>
<g font-family='"Liberation Mono","DejaVu Sans Mono",monospace'>
<defs><linearGradient id="cbg" x1="0" y1="0" x2="0" y2="1"><stop offset="0" stop-color="#5c5c5c"/><stop offset="1" stop-color="#2e2e2e"/></linearGradient></defs>
<rect x="575.2" y="976.3" width="769.3" height="25.9" fill="url(#cbg)" stroke="#555" stroke-width="1" rx="2.5"/>
<rect x="628.8" y="977" width="715.2" height="24.6" fill="#c4c4c4"/>
<rect x="580" y="981.0" width="1.2" height="1.2" fill="#9a9a9a"/>
<rect x="582.6" y="981.0" width="1.2" height="1.2" fill="#9a9a9a"/>
<rect x="580" y="983.4" width="1.2" height="1.2" fill="#9a9a9a"/>
<rect x="582.6" y="983.4" width="1.2" height="1.2" fill="#9a9a9a"/>
<rect x="580" y="985.8" width="1.2" height="1.2" fill="#9a9a9a"/>
<rect x="582.6" y="985.8" width="1.2" height="1.2" fill="#9a9a9a"/>
<rect x="580" y="988.2" width="1.2" height="1.2" fill="#9a9a9a"/>
<rect x="582.6" y="988.2" width="1.2" height="1.2" fill="#9a9a9a"/>
<rect x="580" y="990.6" width="1.2" height="1.2" fill="#9a9a9a"/>
<rect x="582.6" y="990.6" width="1.2" height="1.2" fill="#9a9a9a"/>
<rect x="580" y="993.0" width="1.2" height="1.2" fill="#9a9a9a"/>
<rect x="582.6" y="993.0" width="1.2" height="1.2" fill="#9a9a9a"/>
<rect x="580" y="995.4" width="1.2" height="1.2" fill="#9a9a9a"/>
<rect x="582.6" y="995.4" width="1.2" height="1.2" fill="#9a9a9a"/>
<rect x="580" y="997.8" width="1.2" height="1.2" fill="#9a9a9a"/>
<rect x="582.6" y="997.8" width="1.2" height="1.2" fill="#9a9a9a"/>
<path d="M591 985 l8 8 M599 985 l-8 8" stroke="#e8e8e8" stroke-width="1.800"/>
<path d="M612 985 a3.500 3.500 0 0 0 4.500 4.500 l5 5 l2 -2 l-5 -5 a3.500 3.500 0 0 0 -4.500 -4.500 l2.500 2.500 l-1.500 1.500 z" fill="#e0e0e0"/>
<rect x="634.5" y="982.5" width="12" height="11" fill="#d8d8d8" stroke="#444" stroke-width="1"/>
<path d="M637 985.500 l3 2.500 l-3 2.500 M641.500 991 h3" stroke="#222" stroke-width="1.100" fill="none"/>
<path d="M652.725 987.525 h4.55 l-2.275 2.6 z" fill="#444"/>
<text x="665" y="993" font-size="11.5" fill="#5e5e5e" textLength="98" lengthAdjust="spacingAndGlyphs" font-style="italic">Type a command</text>
<path d="M1332.500 992 l4 -4.500 l4 4.500 z" fill="#222"/>
</g>
</svg>
</div>
<div id="scroll"></div>
<div id="top">
<svg width="1919" height="173" viewBox="0 0 1919 173">
<g font-family='"Liberation Sans",Arial,sans-serif'>
<rect x="0" y="0" width="1919" height="24" fill="#5f2117"/>
<rect x="41" y="0" width="310" height="24" fill="#a2a2a2"/>
<rect x="1310" y="0" width="447" height="24" fill="#a2a2a2"/>
<rect x="0" y="24" width="1919" height="21" fill="#545454"/>
<rect x="0" y="24" width="1919" height="1" fill="#3a3a3a"/>
<defs><linearGradient id="rbg" x1="0" y1="0" x2="0" y2="1"><stop offset="0" stop-color="#4c4c4c"/><stop offset="1" stop-color="#3d3d3d"/></linearGradient><linearGradient id="ddg" x1="0" y1="0" x2="0" y2="1"><stop offset="0" stop-color="#5a5a5a"/><stop offset="1" stop-color="#474747"/></linearGradient></defs>
<rect x="0" y="45" width="1919" height="98" fill="url(#rbg)"/>
<rect x="0" y="45" width="1677" height="98" fill="#5c5c5c"/>
<defs><linearGradient id="tbg" x1="0" y1="0" x2="0" y2="1"><stop offset="0" stop-color="#595959"/><stop offset="1" stop-color="#4a4a4a"/></linearGradient></defs>
<rect x="0" y="124" width="1677" height="18" fill="url(#tbg)"/>
<rect x="0" y="44.5" width="1919" height="1" fill="#333"/>
<rect x="0" y="142" width="1919" height="1.5" fill="#383838"/>
<rect x="0" y="143" width="1919" height="1.2" fill="#747474"/>
<rect x="0" y="144.2" width="1919" height="26" fill="#353535"/>
<rect x="0" y="169" width="1919" height="4" fill="#555555"/>
<defs><linearGradient id="atg" x1="0" y1="0" x2="0" y2="1"><stop offset="0" stop-color="#6c6c6c"/><stop offset="1" stop-color="#555555"/></linearGradient></defs>
<defs><linearGradient id="appg" x1="0" y1="0" x2="0" y2="1"><stop offset="0" stop-color="#cacaca"/><stop offset="0.5" stop-color="#a4a4a4"/><stop offset="1" stop-color="#878787"/></linearGradient></defs>
<rect x="0" y="0" width="41" height="41" fill="#2a2a2a"/>
<rect x="1" y="1" width="39" height="39" fill="url(#appg)"/>
<text x="5" y="29" font-size="36" fill="#c8141a" textLength="23.5" lengthAdjust="spacingAndGlyphs" font-weight="bold">A</text>
<path d="M30.65 18.35 h7.700000000000001 l-3.8500000000000005 4.4 z" fill="#222"/>
<path d="M50 6 h11.500 l4.500 4 v8 h-16 z" fill="#f6f6f6"/><path d="M61.500 6 v4 h4.500 z" fill="#d8dce4"/>
<path d="M74 6 h6 l2 2 h6 v3 h-11 l-3 7 z" fill="#e9e9e9"/><path d="M77.5 11.5 h12.5 l-3.5 7 h-12.5 z" fill="#e0e0e0" stroke="#bbb" stroke-width=".5"/>
<path d="M98 4 h16 v15 h-16 z" fill="#c8c8c8"/><path d="M101 4 h10 v7 h-10 z M101.500 14 h9 v5 h-9 z" fill="#f2f2f2"/>
<path d="M122 4 h16 v15 h-16 z" fill="#c8c8c8"/><path d="M125 4 h10 v7 h-10 z M125.500 14 h6 v5 h-6 z" fill="#f2f2f2"/><path d="M130 17 l6 -6.500 l2.500 2.500 l-6 6.500 z" fill="#eab676"/>
<path d="M147 4 h10 v16 h-10 z" fill="#d8d8d8"/><path d="M148.500 5.500 h7 v11.500 h-7 z" fill="#555"/><path d="M154 14 h3 l1 1.500 h4 v4.500 h-8 z" fill="#f0c060"/>
<path d="M174 4 h10 v16 h-10 z" fill="#d8d8d8"/><path d="M175.500 5.500 h7 v11.500 h-7 z" fill="#555"/><path d="M172 8.500 h5 v-2.500 l4 4 l-4 4 v-2.500 h-5 z" fill="#4aa3e8"/>
<path d="M197 4 h11 v5 h-11 z" fill="#f4f4f4"/><path d="M194 8.500 h17 v8 h-17 z" fill="#ededed"/><path d="M197 13 h11 v6.500 h-11 z" fill="#6fb7f0" stroke="#f4f4f4" stroke-width="1"/>
<path d="M219 11 l6 -4.500 v3 h5 q4 0 4 4 v2 h-2 q0 -3 -3 -3 h-4 v3 z" fill="#b4b4b4"/>
<path d="M240.55 10.45 h4.8999999999999995 l-2.4499999999999997 2.8 z" fill="#b9b9b9"/>
<path d="M270 11 l-6 -4.500 v3 h-5 q-4 0 -4 4 v2 h2 q0 -3 3 -3 h4 v3 z" fill="#b4b4b4"/>
<path d="M276.55 10.45 h4.8999999999999995 l-2.4499999999999997 2.8 z" fill="#b9b9b9"/>
<path d="M291 4 h10 v7 h-10 z" fill="#dfe8ee" stroke="#777" stroke-width=".8"/><path d="M293 13 h6 M293 15.500 h6" stroke="#666" stroke-width="1"/><path d="M298 12 l6 5 l-2 2 l-6 -5 z" fill="#eab676"/>
<path d="M316 4 h10 v4 h-10 z" fill="#f4f4f4"/><path d="M314 8 h14 v6 h-14 z" fill="#ededed"/><path d="M316.500 12 h9 v6 h-9 z" fill="#fff" stroke="#999" stroke-width=".6"/><path d="M319 16.500 h6 v-2 l3.500 3 l-3.500 3 v-2 h-6 z" fill="#4aa3e8"/>
<path d="M338 8 h8" stroke="#f4f4f4" stroke-width="1.4"/>
<path d="M338.85 11.15 h6.3 l-3.15 3.6 z" fill="#f4f4f4"/>
<text x="689" y="16.5" font-size="12" fill="#160806" textLength="130" lengthAdjust="spacingAndGlyphs">Autodesk AutoCAD 2019</text>
<text x="831" y="16.5" font-size="12" fill="#160806" textLength="140" lengthAdjust="spacingAndGlyphs">BJM737, SEKAPIN_183.dwg</text>
<path d="M1314 7.5 v9 l5 -4.5 z" fill="#f4f4f4"/>
<rect x="1324.5" y="2.5" width="177" height="19" fill="#8e8e8e" stroke="#6b6b6b" stroke-width="1"/>
<text x="1328" y="16" font-size="11.5" fill="#474747" textLength="121" lengthAdjust="spacingAndGlyphs" font-style="italic">Type a keyword or phrase</text>
<g fill="#222"><rect x="1510" y="7" width="5" height="11" rx="1.5"/><rect x="1517" y="7" width="5" height="11" rx="1.5"/><rect x="1514" y="9" width="4" height="3"/></g><g fill="#a2a2a2"><rect x="1511.500" y="12" width="2" height="4.500"/><rect x="1518.500" y="12" width="2" height="4.500"/></g>
<circle cx="1540" cy="9" r="4.200" fill="#f4f4f4" stroke="#333" stroke-width="1"/><path d="M1532.500 19.500 q0 -6 7.500 -6 q7.500 0 7.500 6 z" fill="#f4f4f4" stroke="#333" stroke-width="1"/>
<text x="1553" y="17" font-size="12" fill="#e9f3f3" textLength="35" lengthAdjust="spacingAndGlyphs">Sign In</text>
<path d="M1637.55 11.45 h4.8999999999999995 l-2.4499999999999997 2.8 z" fill="#f4f4f4"/>
<path d="M1654 6 h3 l2 8 h8 l2 -6 h-11" fill="none" stroke="#222" stroke-width="1.500"/><circle cx="1660" cy="17.500" r="1.500" fill="#222"/><circle cx="1667" cy="17.500" r="1.500" fill="#222"/>
<path d="M1686 5.500 l-6.500 11 h13 z" fill="none" stroke="#222" stroke-width="1.600"/><circle cx="1686" cy="6" r="2" fill="#eee" stroke="#222"/><circle cx="1680" cy="16.500" r="2" fill="#eee" stroke="#222"/><circle cx="1692" cy="16.500" r="2" fill="#eee" stroke="#222"/>
<path d="M1699.55 11.45 h4.8999999999999995 l-2.4499999999999997 2.8 z" fill="#f4f4f4"/>
<path d="M1713.500 3 v18" stroke="#b4b4b4" stroke-width="1" stroke-dasharray="1 1"/>
<circle cx="1732" cy="12" r="7.500" fill="#24246a" stroke="#f4f4f4" stroke-width="1.300"/>
<text x="1732" y="16.5" font-size="12" fill="#fff" text-anchor="middle" font-weight="bold">?</text>
<path d="M1747.55 11.45 h4.8999999999999995 l-2.4499999999999997 2.8 z" fill="#f4f4f4"/>
<g stroke="#fff" stroke-width="1.1" fill="none"><path d="M1799 12.5 h10"/><path d="M1844.5 9.5 h7 v7 h-7 z M1846.5 9.5 v-2 h7 v7 h-2"/><path d="M1890 7 l10 10 M1900 7 l-10 10"/></g>
<path d="M46.5 45 V29.5 Q46.5 27.5 48.5 27.5 H94.5 Q96.5 27.5 96.5 29.5 V45" fill="#5c5c5c" stroke="#333" stroke-width="1"/>
<rect x="47" y="44" width="49" height="2" fill="#595959"/>
<text x="55" y="39" font-size="12" fill="#f0f0f0" textLength="33" lengthAdjust="spacingAndGlyphs">Home</text>
<text x="108" y="39" font-size="12" fill="#f0f0f0" textLength="29" lengthAdjust="spacingAndGlyphs">Insert</text>
<text x="157" y="39" font-size="12" fill="#f0f0f0" textLength="49" lengthAdjust="spacingAndGlyphs">Annotate</text>
<text x="226" y="39" font-size="12" fill="#f0f0f0" textLength="57" lengthAdjust="spacingAndGlyphs">Parametric</text>
<text x="303" y="39" font-size="12" fill="#f0f0f0" textLength="25" lengthAdjust="spacingAndGlyphs">View</text>
<text x="348" y="39" font-size="12" fill="#f0f0f0" textLength="43" lengthAdjust="spacingAndGlyphs">Manage</text>
<text x="411" y="39" font-size="12" fill="#f0f0f0" textLength="38" lengthAdjust="spacingAndGlyphs">Output</text>
<text x="469" y="39" font-size="12" fill="#f0f0f0" textLength="42" lengthAdjust="spacingAndGlyphs">Add-ins</text>
<text x="531" y="39" font-size="12" fill="#f0f0f0" textLength="61" lengthAdjust="spacingAndGlyphs">Collaborate</text>
<text x="612" y="39" font-size="12" fill="#f0f0f0" textLength="76" lengthAdjust="spacingAndGlyphs">Featured Apps</text>
<text x="708" y="39" font-size="12" fill="#f0f0f0" textLength="69" lengthAdjust="spacingAndGlyphs">Express Tools</text>
<rect x="808" y="30.5" width="14" height="8" fill="#e8e8e8" rx="2"/>
<path d="M811.5 36.5 l3.5 -3.5 l3.5 3.5 z" fill="#333"/>
<path d="M827.2 34.3 h5.6000000000000005 l-2.8000000000000003 3.2 z" fill="#e8e8e8"/>
<rect x="0.5" y="46" width="1" height="96" fill="#3d3d3d"/>
<rect x="1.5" y="46" width="1" height="96" fill="#636363"/>
<rect x="225" y="46" width="1" height="96" fill="#3d3d3d"/>
<rect x="226" y="46" width="1" height="96" fill="#636363"/>
<rect x="474" y="46" width="1" height="96" fill="#3d3d3d"/>
<rect x="475" y="46" width="1" height="96" fill="#636363"/>
<rect x="669" y="46" width="1" height="96" fill="#3d3d3d"/>
<rect x="670" y="46" width="1" height="96" fill="#636363"/>
<rect x="942.5" y="46" width="1" height="96" fill="#3d3d3d"/>
<rect x="943.5" y="46" width="1" height="96" fill="#636363"/>
<rect x="1104" y="46" width="1" height="96" fill="#3d3d3d"/>
<rect x="1105" y="46" width="1" height="96" fill="#636363"/>
<rect x="1369" y="46" width="1" height="96" fill="#3d3d3d"/>
<rect x="1370" y="46" width="1" height="96" fill="#636363"/>
<rect x="1437.5" y="46" width="1" height="96" fill="#3d3d3d"/>
<rect x="1438.5" y="46" width="1" height="96" fill="#636363"/>
<rect x="1534.5" y="46" width="1" height="96" fill="#3d3d3d"/>
<rect x="1535.5" y="46" width="1" height="96" fill="#636363"/>
<rect x="1614.5" y="46" width="1" height="96" fill="#3d3d3d"/>
<rect x="1615.5" y="46" width="1" height="96" fill="#636363"/>
<rect x="1675.5" y="46" width="1" height="96" fill="#3d3d3d"/>
<rect x="1676.5" y="46" width="1" height="96" fill="#636363"/>
<text x="93" y="137" font-size="12" fill="#f0f0f0" textLength="27" lengthAdjust="spacingAndGlyphs">Draw</text>
<path d="M126.15 131.85 h7.700000000000001 l-3.8500000000000005 4.4 z" fill="#f0f0f0"/>
<text x="325" y="137" font-size="12" fill="#f0f0f0" textLength="38" lengthAdjust="spacingAndGlyphs">Modify</text>
<path d="M369.15 131.85 h7.700000000000001 l-3.8500000000000005 4.4 z" fill="#f0f0f0"/>
<text x="536" y="137" font-size="12" fill="#f0f0f0" textLength="60" lengthAdjust="spacingAndGlyphs">Annotation</text>
<path d="M601.15 131.85 h7.700000000000001 l-3.8500000000000005 4.4 z" fill="#f0f0f0"/>
<text x="784" y="137" font-size="12" fill="#f0f0f0" textLength="32" lengthAdjust="spacingAndGlyphs">Layers</text>
<path d="M822.15 131.85 h7.700000000000001 l-3.8500000000000005 4.4 z" fill="#f0f0f0"/>
<text x="1003" y="137" font-size="12" fill="#f0f0f0" textLength="29" lengthAdjust="spacingAndGlyphs">Block</text>
<path d="M1038.15 131.85 h7.700000000000001 l-3.8500000000000005 4.4 z" fill="#f0f0f0"/>
<text x="1198" y="137" font-size="12" fill="#f0f0f0" textLength="53" lengthAdjust="spacingAndGlyphs">Properties</text>
<path d="M1257.15 131.85 h7.700000000000001 l-3.8500000000000005 4.4 z" fill="#f0f0f0"/>
<text x="1377" y="137" font-size="12" fill="#f0f0f0" textLength="39" lengthAdjust="spacingAndGlyphs">Groups</text>
<path d="M1422.15 131.85 h7.700000000000001 l-3.8500000000000005 4.4 z" fill="#f0f0f0"/>
<text x="1459" y="137" font-size="12" fill="#f0f0f0" textLength="40" lengthAdjust="spacingAndGlyphs">Utilities</text>
<path d="M1505.15 131.85 h7.700000000000001 l-3.8500000000000005 4.4 z" fill="#f0f0f0"/>
<text x="1550" y="137" font-size="12" fill="#f0f0f0" textLength="52" lengthAdjust="spacingAndGlyphs">Clipboard</text>
<text x="1621" y="137" font-size="12" fill="#f0f0f0" textLength="25" lengthAdjust="spacingAndGlyphs">View</text>
<path d="M1652.15 131.85 h7.700000000000001 l-3.8500000000000005 4.4 z" fill="#f0f0f0"/>
<path d="M1359 131.5 l3.5 3.5 M1363 135.5 h-3 M1363 135.5 v-3" stroke="#ddd" stroke-width="1" fill="none"/>
<path d="M1666 131.5 l3.5 3.5 M1670 135.5 h-3 M1670 135.5 v-3" stroke="#ddd" stroke-width="1" fill="none"/>
<path d="M9 82 L37 55" stroke="#e4e4e4" stroke-width="1.2"/>
<rect x="6.5" y="80.5" width="3.5" height="3.5" fill="#6cb6f0"/>
<rect x="35.5" y="52" width="3.5" height="3.5" fill="#6cb6f0"/>
<text x="12" y="99" font-size="12" fill="#f0f0f0" textLength="22" lengthAdjust="spacingAndGlyphs">Line</text>
<path d="M54 75.500 h17 M74 75 q8 -1 8 -7.500 q0 -6.500 -8 -7" stroke="#e4e4e4" stroke-width="1.200" fill="none"/>
<rect x="50" y="74" width="3.5" height="3.5" fill="#6cb6f0"/>
<rect x="70" y="74" width="3.5" height="3.5" fill="#6cb6f0"/>
<rect x="70" y="59" width="3.5" height="3.5" fill="#6cb6f0"/>
<text x="45" y="99" font-size="12" fill="#f0f0f0" textLength="42" lengthAdjust="spacingAndGlyphs">Polyline</text>
<circle cx="115.500" cy="67.500" r="15" fill="none" stroke="#e4e4e4" stroke-width="1.2"/>
<path d="M116 67 l8 -8 M120 58.500 h4.500 v4.500" stroke="#6cb6f0" stroke-width="1.200" fill="none"/>
<rect x="113.5" y="66" width="3.5" height="3.5" fill="#6cb6f0"/>
<text x="101" y="99" font-size="12" fill="#f0f0f0" textLength="30" lengthAdjust="spacingAndGlyphs">Circle</text>
<path d="M112.525 105.725 h5.95 l-2.975 3.4 z" fill="#eee"/>
<path d="M149.500 80 q2 -20 26 -25.500" stroke="#e4e4e4" stroke-width="1.200" fill="none"/>
<rect x="147.5" y="79.5" width="3.5" height="3.5" fill="#6cb6f0"/>
<rect x="155.5" y="60.5" width="3.5" height="3.5" fill="#6cb6f0"/>
<rect x="174.5" y="52.5" width="3.5" height="3.5" fill="#6cb6f0"/>
<text x="153" y="99" font-size="12" fill="#f0f0f0" textLength="18" lengthAdjust="spacingAndGlyphs">Arc</text>
<path d="M158.525 105.725 h5.95 l-2.975 3.4 z" fill="#eee"/>
<path d="M188.500 56.500 h13 v9 h-13 z" stroke="#e4e4e4" stroke-width="1.200" fill="none"/>
<rect x="186.5" y="54.5" width="3" height="3" fill="#6cb6f0"/>
<rect x="200.5" y="64.5" width="3" height="3" fill="#6cb6f0"/>
<path d="M209.025 59.725 h5.95 l-2.975 3.4 z" fill="#eee"/>
<ellipse cx="194.500" cy="85" rx="7" ry="5" stroke="#e4e4e4" stroke-width="1.100" fill="none" stroke-dasharray="9 2"/>
<rect x="193" y="79" width="2.5" height="2.5" fill="#6cb6f0"/>
<rect x="193" y="84" width="2.5" height="2.5" fill="#6cb6f0"/>
<rect x="200" y="84" width="2.5" height="2.5" fill="#6cb6f0"/>
<path d="M209.025 83.725 h5.95 l-2.975 3.4 z" fill="#eee"/>
<path d="M188 104 h15 M188 114 h15 M190.500 101.500 v15 M200.500 101.500 v15" stroke="#e4e4e4" stroke-width="1.100"/>
<rect x="191.5" y="105" width="8" height="8" fill="#5aa7e6"/>
<path d="M209.025 107.725 h5.95 l-2.975 3.4 z" fill="#eee"/>
<path d="M240.500 53.500 v14 M233.500 60.500 h14 M238 56 l2.500 -2.500 l2.500 2.500 M238 65 l2.500 2.500 l2.500 -2.500 M236 58 l-2.500 2.500 l2.500 2.500 M245 58 l2.500 2.500 l-2.500 2.500" stroke="#e4e4e4" stroke-width="1.300" fill="none"/>
<text x="254" y="65" font-size="12" fill="#f0f0f0" textLength="30" lengthAdjust="spacingAndGlyphs">Move</text>
<circle cx="237" cy="80" r="3" stroke="#e4e4e4" fill="none" stroke-width="1.1"/><path d="M242 79 h5 v4 M245.500 81.500 l1.500 2 l1.500 -2" stroke="#e4e4e4" fill="none" stroke-width="1.1"/><circle cx="240" cy="89" r="3" stroke="#6cb6f0" fill="none" stroke-width="1.200"/><circle cx="245.500" cy="89" r="3" stroke="#6cb6f0" fill="none" stroke-width="1.200"/>
<text x="254" y="89" font-size="12" fill="#f0f0f0" textLength="28" lengthAdjust="spacingAndGlyphs">Copy</text>
<path d="M233.500 101.500 h7 v15 h-7 z M240.500 109 v7.500" stroke="#e4e4e4" fill="none" stroke-width="1.100"/><path d="M242.500 101.500 h2 l4 15 h-8" stroke="#6cb6f0" fill="none" stroke-width="1.100"/><path d="M238 113 h6 M242.500 111.500 l1.500 1.500 l-1.500 1.500" stroke="#e4e4e4" fill="none" stroke-width="1"/>
<text x="254" y="113" font-size="12" fill="#f0f0f0" textLength="37" lengthAdjust="spacingAndGlyphs">Stretch</text>
<path d="M317 55.500 a7 7 0 1 0 2.800 5.500 M314.500 53 l3 2.500 l-3 2.500" stroke="#e4e4e4" stroke-width="1.300" fill="none"/>
<text x="326" y="65" font-size="12" fill="#f0f0f0" textLength="34" lengthAdjust="spacingAndGlyphs">Rotate</text>
<path d="M311 78.500 l-5.500 13 h5.500 z" stroke="#e4e4e4" fill="none" stroke-width="1.100"/><path d="M314 78.500 l5.500 13 h-5.500 z" stroke="#6cb6f0" fill="none" stroke-width="1.200"/>
<text x="326" y="89" font-size="12" fill="#f0f0f0" textLength="33" lengthAdjust="spacingAndGlyphs">Mirror</text>
<path d="M305.500 108.500 h7 v8 h-7 z" stroke="#e4e4e4" fill="none" stroke-width="1.100"/><path d="M305.500 106 v-4.500 h15 v15 h-5" stroke="#6cb6f0" fill="none" stroke-width="1.200"/>
<text x="326" y="113" font-size="12" fill="#f0f0f0" textLength="27" lengthAdjust="spacingAndGlyphs">Scale</text>
<rect x="370.5" y="50.5" width="54" height="21" fill="#727272" stroke="#303030" stroke-width="1"/>
<rect x="425.5" y="50.5" width="12" height="21" fill="#6a6a6a" stroke="#303030" stroke-width="1"/>
<path d="M374.500 54 h6" stroke="#6cb6f0" stroke-dasharray="1.500 1" stroke-width="1"/><path d="M384 54 h6" stroke="#e4e4e4" stroke-width="1"/>
<path d="M378 54 l6.500 10 M386.500 55 l-4.500 8" stroke="#e4e4e4" stroke-width="1.600"/><circle cx="381.500" cy="66" r="2" stroke="#e4e4e4" fill="none" stroke-width="1.100"/><circle cx="387" cy="64.500" r="2" stroke="#e4e4e4" fill="none" stroke-width="1.100"/>
<text x="396" y="65" font-size="12" fill="#f0f0f0" textLength="22" lengthAdjust="spacingAndGlyphs">Trim</text>
<path d="M428.525 59.725 h5.95 l-2.975 3.4 z" fill="#eee"/>
<path d="M374.500 93 v-4 M374.500 88 q0 -11 10 -11" stroke="#6cb6f0" stroke-width="1.200" fill="none"/><path d="M386 77 h4 M374.500 90 v3" stroke="#e4e4e4" stroke-width="1.100"/>
<text x="395" y="89" font-size="12" fill="#f0f0f0" textLength="25" lengthAdjust="spacingAndGlyphs">Fillet</text>
<path d="M430.525 84.225 h5.95 l-2.975 3.4 z" fill="#eee"/>
<rect x="375.5" y="102.5" width="5.5" height="5.5" fill="none" stroke="#6cb6f0" stroke-width="1.1"/>
<rect x="375.5" y="111.0" width="5.5" height="5.5" fill="none" stroke="#6cb6f0" stroke-width="1.1"/>
<rect x="384.0" y="102.5" width="5.5" height="5.5" fill="none" stroke="#6cb6f0" stroke-width="1.1"/>
<rect x="384.0" y="111.0" width="5.5" height="5.5" fill="none" stroke="#6cb6f0" stroke-width="1.1"/>
<text x="395" y="113" font-size="12" fill="#f0f0f0" textLength="28" lengthAdjust="spacingAndGlyphs">Array</text>
<path d="M430.525 108.225 h5.95 l-2.975 3.4 z" fill="#eee"/>
<path d="M453 65 l9 -11 l3.500 2.500 l-8.500 11 z" fill="#f2c77e"/><path d="M452 66.500 l2.500 -3 l3 2.500 l-2.500 3 z" fill="#c0664a"/><path d="M449 68.500 h4" stroke="#e4e4e4" stroke-width="1"/><path d="M455 68.500 h10" stroke="#6cb6f0" stroke-width="1"/>
<path d="M451.500 82.500 h9 v9 h-9 z" stroke="#e4e4e4" fill="none" stroke-width="1.1"/><path d="M449.500 91.500 v-9.500 l4 -3.500 h11 v9.500 l-4 3.500" stroke="#6cb6f0" fill="none" stroke-width="1.200"/><path d="M464.500 78.500 l-4 4" stroke="#6cb6f0" stroke-width="1.100"/>
<path d="M465 103.500 h-9 a5.500 5.500 0 0 0 0 11 h9" stroke="#6cb6f0" fill="none" stroke-width="1.300"/><path d="M465 106.500 h-8.500 a2.500 2.500 0 0 0 0 5 h8.500" stroke="#e4e4e4" fill="none" stroke-width="1.200"/>
<text x="487" y="82" font-size="39" fill="#dedede" textLength="26" lengthAdjust="spacingAndGlyphs">A</text>
<text x="489" y="99" font-size="12" fill="#f0f0f0" textLength="21" lengthAdjust="spacingAndGlyphs">Text</text>
<path d="M496.025 105.725 h5.95 l-2.975 3.4 z" fill="#eee"/>
<path d="M536.500 52.500 v32 M567.500 52.500 v32 M538 58.500 h28 M540.500 56.500 l-2.500 2 l2.500 2 M564 56.500 l2.500 2 l-2.500 2" stroke="#e4e4e4" stroke-width="1" fill="none"/>
<path d="M552 68 v6 M545 71 l4 4 M559 71 l-4 4 M541 78 l5 1.500 M563 78 l-5 1.500" stroke="#f3c56a" stroke-width="2"/>
<text x="524" y="99" font-size="12" fill="#f0f0f0" textLength="57" lengthAdjust="spacingAndGlyphs">Dimension</text>
<path d="M593.200 57 L601.600 64.800" stroke="#6cb6f0" stroke-width="1.300"/><path d="M589 58.500 L595.500 53 M599 69 L605 63.500" stroke="#e4e4e4" stroke-width="1.100"/>
<text x="610" y="65" font-size="12" fill="#f0f0f0" textLength="41" lengthAdjust="spacingAndGlyphs">Aligned</text>
<path d="M658.025 59.725 h5.95 l-2.975 3.4 z" fill="#eee"/>
<circle cx="601.500" cy="81" r="3" stroke="#e4e4e4" fill="none" stroke-width="1.1"/><path d="M598.500 82 q-7 1 -8.500 8 M589 87 l1 3.500 l3 -2" stroke="#e4e4e4" fill="none" stroke-width="1.100"/>
<text x="610" y="89" font-size="12" fill="#f0f0f0" textLength="36" lengthAdjust="spacingAndGlyphs">Leader</text>
<path d="M652.525 84.225 h5.95 l-2.975 3.4 z" fill="#eee"/>
<path d="M589.500 102.500 h15 v13 h-15 z M589.500 106 h15 M589.500 109 h15 M589.500 112 h15 M594.500 106 v9.500 M599.500 106 v9.500" stroke="#e4e4e4" fill="none" stroke-width="1"/>
<text x="610" y="113" font-size="12" fill="#f0f0f0" textLength="27" lengthAdjust="spacingAndGlyphs">Table</text>
<path d="M686 76.7 L697 65 H713 L702.800 76.7 Z" fill="#d2d2d2" stroke="#5c5c5c" stroke-width="1"/>
<path d="M686 70.2 L697 58.5 H713 L702.800 70.2 Z" fill="#d2d2d2" stroke="#5c5c5c" stroke-width="1"/>
<path d="M686 63.7 L697 52 H713 L702.800 63.7 Z" fill="#d2d2d2" stroke="#5c5c5c" stroke-width="1"/>
<rect x="705.5" y="66.5" width="13" height="17" fill="#e8e8e8" stroke="#888" stroke-width="1"/>
<rect x="708" y="69" width="8" height="6" fill="#5aa7e6"/>
<path d="M708 78 h8 M708 81 h8" stroke="#555" stroke-width="1"/>
<text x="688" y="99" font-size="12" fill="#f0f0f0" textLength="29" lengthAdjust="spacingAndGlyphs">Layer</text>
<text x="676" y="114" font-size="12" fill="#f0f0f0" textLength="53" lengthAdjust="spacingAndGlyphs">Properties</text>
<rect x="733.5" y="50.5" width="207" height="20" fill="url(#ddg)" stroke="#2e2e2e" stroke-width="1"/>
<circle cx="744.500" cy="59" r="4.500" fill="#f3c56a"/><rect x="742.500" y="63" width="4" height="3.500" fill="#ddd"/>
<circle cx="763" cy="60.500" r="4.500" fill="#f3c56a"/><path d="M763 53 v2 M763 66 v2 M755.500 60.500 h2 M768.500 60.500 h2 M757.500 55 l1.500 1.500 M768.500 55 l-1.500 1.500 M757.500 66 l1.500 -1.500 M768.500 66 l-1.500 -1.500" stroke="#f3c56a" stroke-width="1.200"/>
<rect x="776" y="60" width="9.5" height="7" fill="#f3c56a"/>
<path d="M781.500 60 v-3 a2.500 2.500 0 0 1 5 0" stroke="#f3c56a" stroke-width="1.500" fill="none"/>
<rect x="796.5" y="54.5" width="12" height="12" fill="#ffffff" stroke="#222" stroke-width="1.2"/>
<text x="814" y="65" font-size="12" fill="#f0f0f0">0</text>
<path d="M931.5 59.5 h7.0 l-3.5 4.0 z" fill="#eee"/>
<path d="M737 83.7 l6 -5.2 h7.500 l-4.500 5.2 z" fill="#d2d2d2" stroke="#5c5c5c" stroke-width=".4"/>
<circle cx="749.500" cy="86.500" r="3.600" fill="#8ccdf2"/><rect x="748" y="90" width="3" height="2.500" fill="#eee"/>
<path d="M761 88.5 l6 -4.5 h7.500 l-4.500 4.5 z" fill="#6cb6f0" stroke="#5c5c5c" stroke-width=".4"/><path d="M761 85.0 l6 -4.5 h7.500 l-4.500 4.5 z" fill="#d2d2d2" stroke="#5c5c5c" stroke-width=".4"/><path d="M761 81.5 l6 -4.5 h7.500 l-4.500 4.5 z" fill="#d2d2d2" stroke="#5c5c5c" stroke-width=".4"/>
<path d="M776.500 86.500 l-5.500 5.500 M771 88.500 v3.500 h3.500" stroke="#eee" stroke-width="1.300" fill="none"/>
<path d="M785 83.7 l6 -5.2 h7.500 l-4.500 5.2 z" fill="#d2d2d2" stroke="#5c5c5c" stroke-width=".4"/>
<path d="M796.500 84 v9 M792.600 86.200 l7.800 4.600 M800.400 86.200 l-7.800 4.600" stroke="#6cb6f0" stroke-width="1.300"/><circle cx="796.500" cy="88.500" r="2.600" fill="none" stroke="#6cb6f0" stroke-width=".9"/>
<path d="M809 83.7 l6 -5.2 h7.500 l-4.500 5.2 z" fill="#d2d2d2" stroke="#5c5c5c" stroke-width=".4"/>
<rect x="817.5" y="87.5" width="8" height="6" fill="#6cb6f0"/>
<path d="M819.500 87.500 v-1.500 a2 2 0 0 1 4 0 v1.500" stroke="#6cb6f0" fill="none" stroke-width="1.300"/>
<path d="M737 112.5 l6 -4.5 h7.500 l-4.500 4.5 z" fill="#d2d2d2" stroke="#5c5c5c" stroke-width=".4"/><path d="M737 109.0 l6 -4.5 h7.500 l-4.500 4.5 z" fill="#d2d2d2" stroke="#5c5c5c" stroke-width=".4"/><path d="M737 105.5 l6 -4.5 h7.500 l-4.500 4.5 z" fill="#d2d2d2" stroke="#5c5c5c" stroke-width=".4"/>
<circle cx="749.500" cy="110.500" r="3.600" fill="#f3c56a"/><rect x="748" y="114" width="3" height="2.500" fill="#eee"/>
<path d="M761 112.5 l6 -4.5 h7.500 l-4.500 4.5 z" fill="#6cb6f0" stroke="#5c5c5c" stroke-width=".4"/><path d="M761 109.0 l6 -4.5 h7.500 l-4.500 4.5 z" fill="#d2d2d2" stroke="#5c5c5c" stroke-width=".4"/><path d="M761 105.5 l6 -4.5 h7.500 l-4.500 4.5 z" fill="#d2d2d2" stroke="#5c5c5c" stroke-width=".4"/>
<path d="M771 116.500 l5.500 -5.500 M776.500 114.500 v-3.500 h-3.500" stroke="#eee" stroke-width="1.300" fill="none"/>
<path d="M785 112.5 l6 -4.5 h7.500 l-4.500 4.5 z" fill="#d2d2d2" stroke="#5c5c5c" stroke-width=".4"/><path d="M785 109.0 l6 -4.5 h7.500 l-4.500 4.5 z" fill="#d2d2d2" stroke="#5c5c5c" stroke-width=".4"/><path d="M785 105.5 l6 -4.5 h7.500 l-4.500 4.5 z" fill="#d2d2d2" stroke="#5c5c5c" stroke-width=".4"/>
<circle cx="796.500" cy="112.500" r="2.800" fill="#f3c56a"/><circle cx="796.500" cy="112.500" r="4.600" fill="none" stroke="#f3c56a" stroke-width="1.100" stroke-dasharray="1.200 1.690"/>
<path d="M809 107.7 l6 -5.2 h7.500 l-4.500 5.2 z" fill="#d2d2d2" stroke="#5c5c5c" stroke-width=".4"/>
<rect x="816.5" y="111.5" width="8" height="5.5" fill="#f3c56a"/>
<path d="M821 111.500 v-2 a2 2 0 0 1 4 0" stroke="#f3c56a" fill="none" stroke-width="1.300"/>
<path d="M833 92.5 l6 -4 h7.500 l-4.500 4 z" fill="#d2d2d2" stroke="#5c5c5c" stroke-width=".4"/>
<path d="M833 89.5 l6 -4 h7.500 l-4.500 4 z" fill="#d2d2d2" stroke="#5c5c5c" stroke-width=".4"/>
<path d="M833 86.5 l6 -5 h7.500 l-4.500 5 z" fill="#6cb6f0" stroke="#5c5c5c" stroke-width=".4"/>
<circle cx="841.500" cy="80" r="3.200" fill="#d0d0d0"/>
<text x="854" y="89" font-size="12" fill="#f0f0f0" textLength="72" lengthAdjust="spacingAndGlyphs">Make Current</text>
<path d="M833 112.5 l6 -4.5 h7.500 l-4.500 4.5 z" fill="#d2d2d2" stroke="#5c5c5c" stroke-width=".4"/><path d="M833 109.0 l6 -4.5 h7.500 l-4.500 4.5 z" fill="#d2d2d2" stroke="#5c5c5c" stroke-width=".4"/><path d="M833 105.5 l6 -4.5 h7.500 l-4.500 4.5 z" fill="#d2d2d2" stroke="#5c5c5c" stroke-width=".4"/>
<path d="M840.500 111 l4 -3.500 l4 4.500 l-4 3.500 z" fill="#f3c56a"/><path d="M845 107 l2 -1.800 l4 4.500 l-2 1.800 z" fill="#f4f4f4"/>
<text x="854" y="113" font-size="12" fill="#f0f0f0" textLength="65" lengthAdjust="spacingAndGlyphs">Match Layer</text>
<path d="M964 50 h12.500 l5 5 v19 h-17.500 z" fill="#7bbcf0"/><path d="M976.500 50 v5 h5 z" fill="#cfe6fa"/>
<rect x="950.5" y="60.5" width="20" height="14" fill="#6a6a6a" stroke="#ddd" stroke-width="1.2"/>
<circle cx="971" cy="74" r="6.500" fill="#7d7d7d" stroke="#ddd" stroke-width="1.200"/>
<rect x="949" y="73" width="3" height="3" fill="#ddd"/>
<text x="951" y="98" font-size="12" fill="#f0f0f0" textLength="29" lengthAdjust="spacingAndGlyphs">Insert</text>
<path d="M962.025 104.725 h5.95 l-2.975 3.4 z" fill="#eee"/>
<path d="M990 58 h11 v7 h-11 z M990 65 v3 M1001 65 v3" stroke="#ddd" fill="none" stroke-width="1.100"/><circle cx="999" cy="65" r="3" fill="none" stroke="#ddd" stroke-width="1"/>
<path d="M990 82 h11 v7 h-11 z M990 89 v3 M1001 89 v3" stroke="#ddd" fill="none" stroke-width="1.100"/><circle cx="999" cy="89" r="3" fill="none" stroke="#ddd" stroke-width="1"/>
<path d="M999 51.500 l1.200 3 l3 -1 l-1.500 2.800 l2.800 1.500 l-3 1 l0.500 3 l-3 -1.500 l-2 2.500 l-0.500 -3.200 l-3 -0.300 l2.200 -2.300 l-2 -2.500 l3.200 0.300 z" fill="#f3c56a"/>
<text x="1010" y="65" font-size="12" fill="#f0f0f0" textLength="34" lengthAdjust="spacingAndGlyphs">Create</text>
<path d="M997 85 l5.500 -6.500 l2.500 2 l-5.500 6.500 z" fill="#f3c56a"/><path d="M1002.500 78.500 l1.500 -1.800 l2.500 2 l-1.500 1.800 z" fill="#c0664a"/>
<text x="1010" y="89" font-size="12" fill="#f0f0f0" textLength="20" lengthAdjust="spacingAndGlyphs">Edit</text>
<path d="M994 102.500 H989.500 V108 L997 116 L1004 109" stroke="#e4e4e4" fill="none" stroke-width="2"/><path d="M992.500 106 h2 M994 109.500 l2 2" stroke="#e4e4e4" stroke-width="1"/><path d="M996 110 l5.500 -6.500 l2.500 2 l-5.500 6.500 z" fill="#f3c56a"/><path d="M1001.500 103.500 l1.500 -1.800 l2.500 2 l-1.500 1.800 z" fill="#c0664a"/>
<text x="1010" y="113" font-size="12" fill="#f0f0f0" textLength="75" lengthAdjust="spacingAndGlyphs">Edit Attributes</text>
<path d="M1092.025 108.225 h5.95 l-2.975 3.4 z" fill="#eee"/>
<rect x="1122.5" y="52.5" width="19" height="26" fill="#d8d8d8" stroke="#999" stroke-width="1"/>
<rect x="1125" y="55.5" width="13" height="9" fill="#5eb0ee"/>
<path d="M1125 69.500 h8 M1125 74 h6 M1128 67.500 v4 M1131.500 72 v4" stroke="#555" stroke-width="1"/><path d="M1137 73 l6 -6 l5 5 l-6 6 z" fill="#f3c56a"/><path d="M1144 66 l3 -3 l4.500 4.500 l-3 3 z" fill="#eee"/>
<text x="1120" y="99" font-size="12" fill="#f0f0f0" textLength="34" lengthAdjust="spacingAndGlyphs">Match</text>
<text x="1110" y="114" font-size="12" fill="#f0f0f0" textLength="53" lengthAdjust="spacingAndGlyphs">Properties</text>
<path d="M1176.500 60 L1176.50 52.00 A8 8 0 0 1 1183.43 56.00 Z" fill="#e8524a"/>
<path d="M1176.500 60 L1183.43 56.00 A8 8 0 0 1 1183.43 64.00 Z" fill="#f0a040"/>
<path d="M1176.500 60 L1183.43 64.00 A8 8 0 0 1 1176.50 68.00 Z" fill="#e8d84a"/>
<path d="M1176.500 60 L1176.50 68.00 A8 8 0 0 1 1169.57 64.00 Z" fill="#5ac05a"/>
<path d="M1176.500 60 L1169.57 64.00 A8 8 0 0 1 1169.57 56.00 Z" fill="#4aa0e8"/>
<path d="M1176.500 60 L1169.57 56.00 A8 8 0 0 1 1176.50 52.00 Z" fill="#a060d0"/>
<path d="M1169 77.500 h16 M1169 81.500 h16 M1169 86 h16 M1169 90 h16" stroke="#ddd" stroke-width="2"/><path d="M1169 77.500 h16" stroke="#ddd" stroke-width="1"/>
<path d="M1169 102.500 h16 M1169 110 h16" stroke="#ddd" stroke-width="1" stroke-dasharray="1.500 1"/><path d="M1169 106 h16 M1169 113.500 h16" stroke="#ddd" stroke-width="1" stroke-dasharray="4 1.500"/>
<rect x="1187.5" y="50.5" width="179" height="20.5" fill="url(#ddg)" stroke="#2e2e2e" stroke-width="1"/>
<path d="M1357.325 59.425 h7.3500000000000005 l-3.6750000000000003 4.2 z" fill="#eee"/>
<rect x="1187.5" y="73.5" width="179" height="20.5" fill="url(#ddg)" stroke="#2e2e2e" stroke-width="1"/>
<path d="M1357.325 82.425 h7.3500000000000005 l-3.6750000000000003 4.2 z" fill="#eee"/>
<rect x="1187.5" y="97.5" width="179" height="20.5" fill="url(#ddg)" stroke="#2e2e2e" stroke-width="1"/>
<path d="M1357.325 106.425 h7.3500000000000005 l-3.6750000000000003 4.2 z" fill="#eee"/>
<rect x="1200" y="53" width="16" height="15.5" fill="#fff" stroke="#333" stroke-width="1"/>
<text x="1226" y="65" font-size="12" fill="#f0f0f0" textLength="41" lengthAdjust="spacingAndGlyphs">ByLayer</text>
<path d="M1191 83.500 h63 M1191 107.500 h63" stroke="#ffffff" stroke-width="1"/>
<text x="1257" y="88" font-size="12" fill="#f0f0f0" textLength="41" lengthAdjust="spacingAndGlyphs">ByLayer</text>
<text x="1257" y="112" font-size="12" fill="#f0f0f0" textLength="47" lengthAdjust="spacingAndGlyphs">BYLAYER</text>
<path d="M1380 56.500 h-4 v26 h4 M1392 70 v12.500 h-4" stroke="#eee" stroke-width="1.800" fill="none"/>
<rect x="1381" y="59" width="8.5" height="7" fill="#5aa7e6"/>
<rect x="1383.5" y="61" width="3.5" height="3" fill="#3a6a9a"/>
<circle cx="1385.500" cy="74" r="4" fill="#888" stroke="#ccc" stroke-width="1.500"/>
<path d="M1397 53 l1.500 4 l4 -1.500 l-2 3.800 l3.800 2 l-4 1.200 l0.800 4 l-3.800 -2 l-2.500 3.200 l-0.800 -4.200 l-4 -0.300 l3 -3 l-2.800 -3.200 l4.200 0.400 z" fill="#f3c56a"/>
<text x="1375" y="99" font-size="12" fill="#f0f0f0" textLength="33" lengthAdjust="spacingAndGlyphs">Group</text>
<rect x="1417.5" y="56" width="4" height="4" fill="none" stroke="#6cb6f0" stroke-width="1"/>
<circle cx="1420" cy="65" r="2.300" fill="none" stroke="#ccc"/><path d="M1424 54 h3 v14 h-3" stroke="#ddd" fill="none"/><path d="M1424 58 l5 5 M1429 58 l-5 5" stroke="#d07050" stroke-width="1.300"/>
<path d="M1419 78 h-2.500 v13 h2.500 M1425 78 h2.500 v6" stroke="#ddd" fill="none"/>
<rect x="1419.5" y="80" width="3.5" height="3.5" fill="none" stroke="#6cb6f0" stroke-width="1"/>
<circle cx="1421.500" cy="88" r="2" fill="none" stroke="#ccc"/><path d="M1425 92 l5 -6 l2 2 l-5 6 z" fill="#f3c56a"/>
<rect x="1412.5" y="98.5" width="23" height="21" fill="#3f5f95" stroke="#8fb0e0" stroke-width="1"/>
<path d="M1419 102 h-2.500 v13 h2.500 M1426 102 h2.500 v4" stroke="#cfe" fill="none"/>
<rect x="1419.5" y="103.5" width="4" height="3.5" fill="none" stroke="#8fd" stroke-width="1"/>
<circle cx="1421.500" cy="111.500" r="2" fill="none" stroke="#8fd"/>
<path d="M1425 105 v11 l2.500 -2.500 l2 4 l1.500 -1 l-2 -3.500 h3.500 z" fill="#fff" stroke="#333" stroke-width=".6"/>
<path d="M1461.500 60 v8 M1488.500 60 v8 M1463 64 h24 M1465.500 62 l-2.500 2 l2.500 2 M1484.500 62 l2.500 2 l-2.500 2" stroke="#ddd" fill="none" stroke-width="1"/>
<rect x="1461" y="70" width="28" height="6" fill="#f3c56a"/>
<path d="M1464.500 70 v3 M1468 70 v2 M1471.500 70 v3 M1475 70 v2 M1478.500 70 v3 M1482 70 v2 M1485.500 70 v3" stroke="#7a5a1a" stroke-width=".8"/>
<text x="1452" y="99" font-size="12" fill="#f0f0f0" textLength="46" lengthAdjust="spacingAndGlyphs">Measure</text>
<path d="M1472.025 105.725 h5.95 l-2.975 3.4 z" fill="#eee"/>
<path d="M1513 57 v11 l2.500 -2.500 l2 4 l1.500 -1 l-2 -3.500 h3.500 z" fill="#fff"/>
<rect x="1520.5" y="60.5" width="8" height="7" fill="#6ab0ee" stroke="#ddd" stroke-width="1"/>
<path d="M1519 54 l3 -1 l-1 3 l3 -1" stroke="#f3c56a" fill="none" stroke-width="1.300"/>
<rect x="1514" y="78" width="13" height="12" fill="none" stroke="#6ac08a" stroke-width="1" stroke-dasharray="2 1"/>
<path d="M1517 81 h6 v6 h-6 z" fill="#4a9a6a" stroke="#9fe0b0"/>
<path d="M1522 82 v10 l2.500 -2.500 l2 4 l1.500 -1 l-2 -3.500 h3.500 z" fill="#fff" stroke="#333" stroke-width=".5"/>
<rect x="1515.5" y="101.5" width="11" height="15" fill="#d8d8d8" stroke="#888" stroke-width="1"/>
<rect x="1517.5" y="103.5" width="7" height="3" fill="#555"/>
<rect x="1517.5" y="108.5" width="1.6" height="1.6" fill="#555"/>
<rect x="1517.5" y="111.1" width="1.6" height="1.6" fill="#555"/>
<rect x="1517.5" y="113.7" width="1.6" height="1.6" fill="#555"/>
<rect x="1520.1" y="108.5" width="1.6" height="1.6" fill="#555"/>
<rect x="1520.1" y="111.1" width="1.6" height="1.6" fill="#555"/>
<rect x="1520.1" y="113.7" width="1.6" height="1.6" fill="#555"/>
<rect x="1522.7" y="108.5" width="1.6" height="1.6" fill="#555"/>
<rect x="1522.7" y="111.1" width="1.6" height="1.6" fill="#555"/>
<rect x="1522.7" y="113.7" width="1.6" height="1.6" fill="#555"/>
<rect x="1550.5" y="57.5" width="18" height="22" fill="#d9a066"/>
<rect x="1556" y="54" width="7" height="5" fill="#eee"/>
<path d="M1558 60.500 h13 l5 5 v18 h-18 z" fill="#e2e2e2"/><path d="M1571 60.500 v5 h5 z" fill="#aaa"/>
<text x="1549" y="99" font-size="12" fill="#f0f0f0" textLength="28" lengthAdjust="spacingAndGlyphs">Paste</text>
<path d="M1560.025 105.725 h5.95 l-2.975 3.4 z" fill="#eee"/>
<rect x="1594" y="54.5" width="10" height="11" fill="#ddd"/>
<path d="M1596 57.500 h6 M1596 60 h6 M1596 62.500 h4" stroke="#555" stroke-width=".9"/><path d="M1600 59 l7 8 M1607 59 l-6 8" stroke="#eee" stroke-width="1.300"/><circle cx="1600.500" cy="68" r="1.500" fill="none" stroke="#eee"/><circle cx="1607" cy="68" r="1.500" fill="none" stroke="#eee"/>
<path d="M1594.500 77.500 h6 l2 2 v9 h-8 z" fill="#cfcfcf"/><path d="M1598.500 81.500 h6 l2 2 v9 h-8 z" fill="#e6e6e6" stroke="#777" stroke-width=".6"/>
<path d="M1631 56 h13.500 v9.500 h18.500 v14.500 h-32 z" fill="#dcdcdc"/>
<text x="1635" y="99" font-size="12" fill="#f0f0f0" textLength="24" lengthAdjust="spacingAndGlyphs">Base</text>
<path d="M1644.025 105.725 h5.95 l-2.975 3.4 z" fill="#eee"/>
<path d="M14 169.5 C21 167.5 20 148 30 148 H135 C142 148 144 166.5 150 169.5 Z" fill="#474747"/>
<text x="32" y="163" font-size="12" fill="#c4c4c4" textLength="24" lengthAdjust="spacingAndGlyphs">Start</text>
<path d="M137 169.5 C144 167.5 143 148 153 148 H289 C296 148 298 166.5 304 169.5 Z" fill="#474747"/>
<text x="155" y="163" font-size="12" fill="#c4c4c4" textLength="114" lengthAdjust="spacingAndGlyphs">BJM737, SEKAPIN_12*</text>
<path d="M280 154.5 l6 6 M286 154.5 l-6 6" stroke="#2c2c2c" stroke-width="1.6"/>
<path d="M291 169.5 C298 167.5 297 148 307 148 H449 C456 148 458 166.5 464 169.5 Z" fill="#474747"/>
<text x="309" y="163" font-size="12" fill="#c4c4c4" textLength="119" lengthAdjust="spacingAndGlyphs">BJM737, SEKAPIN_181*</text>
<path d="M439 154.5 l6 6 M445 154.5 l-6 6" stroke="#2c2c2c" stroke-width="1.6"/>
<path d="M451 169.5 C458 167.5 457 148 467 148 H602 C609 148 611 166.5 617 169.5 Z" fill="#474747"/>
<text x="469" y="163" font-size="12" fill="#c4c4c4" textLength="115" lengthAdjust="spacingAndGlyphs">BJM737, SEKAPIN_182</text>
<path d="M594 154.5 l6 6 M600 154.5 l-6 6" stroke="#2c2c2c" stroke-width="1.6"/>
<path d="M605 173 C612 171 611 148 621 148 H765 C772 148 774 170 780 173 Z" fill="url(#atg)"/>
<text x="624" y="163" font-size="12" fill="#f2f2f2" textLength="119" lengthAdjust="spacingAndGlyphs">BJM737, SEKAPIN_183*</text>
<path d="M754 154.5 l6 6 M760 154.5 l-6 6" stroke="#3a3a3a" stroke-width="1.6"/>
<path d="M780 152 H794 C801 152 803 160 803 166 H790 C783 166 781 158 780 152 Z" fill="#474747"/>
<path d="M788 159 h8 M792 155 v8" stroke="#d0d0d0" stroke-width="1.700"/>
</g>
</svg>
</div>
<div id="status">
<svg width="1919" height="27" viewBox="0 1002 1919 27">
<g font-family='"Liberation Sans",Arial,sans-serif'>
<rect x="0" y="1003" width="1919" height="26" fill="#3a3a3a"/>
<rect x="0" y="1003" width="1919" height="0.8" fill="#5a5a5a"/>
<rect x="672" y="1004" width="1247" height="25" fill="#4d4d4d"/>
<rect x="671" y="1004" width="1" height="25" fill="#6a6a6a"/>
<path d="M8 1003.500 C16 1004 14 1021 24 1021 H58 C66 1021 64 1004 72 1003.500 Z" fill="#5a5a5a"/>
<path d="M70 1005 C76 1010 74 1021 82 1021 H124 C132 1021 131 1005 138 1003.500 H72 Z" fill="#474747"/>
<path d="M136 1021 C142 1018 141 1005 148 1004.500 H156 Q161 1005 161 1010 V1021 Z" fill="#474747"/>
<text x="23" y="1016.5" font-size="12" fill="#ffffff" textLength="35" lengthAdjust="spacingAndGlyphs" font-weight="bold">Model</text>
<text x="81" y="1016.5" font-size="12" fill="#d0d0d0" textLength="42" lengthAdjust="spacingAndGlyphs">Layout1</text>
<path d="M145.500 1012.500 h8 M149.500 1008.500 v8" stroke="#d0d0d0" stroke-width="1.600"/>
<text x="699" y="1021" font-size="12.5" fill="#f4f4f4" textLength="149" lengthAdjust="spacingAndGlyphs">986.2558, -17.8329, 0.0000</text>
<text x="859" y="1021" font-size="12.5" fill="#f4f4f4" textLength="41" lengthAdjust="spacingAndGlyphs">MODEL</text>
<rect x="853" y="1005" width="1" height="23" fill="#3a3a3a"/>
<rect x="854" y="1005" width="1" height="23" fill="#5e5e5e"/>
<rect x="905" y="1005" width="1" height="23" fill="#3a3a3a"/>
<rect x="906" y="1005" width="1" height="23" fill="#5e5e5e"/>
<rect x="970" y="1005" width="1" height="23" fill="#3a3a3a"/>
<rect x="971" y="1005" width="1" height="23" fill="#5e5e5e"/>
<rect x="1409" y="1005" width="1" height="23" fill="#3a3a3a"/>
<rect x="1410" y="1005" width="1" height="23" fill="#5e5e5e"/>
<rect x="1557" y="1005" width="1" height="23" fill="#3a3a3a"/>
<rect x="1558" y="1005" width="1" height="23" fill="#5e5e5e"/>
<rect x="1598" y="1005" width="1" height="23" fill="#3a3a3a"/>
<rect x="1599" y="1005" width="1" height="23" fill="#5e5e5e"/>
<rect x="1625" y="1005" width="1" height="23" fill="#3a3a3a"/>
<rect x="1626" y="1005" width="1" height="23" fill="#5e5e5e"/>
<rect x="1724" y="1005" width="1" height="23" fill="#3a3a3a"/>
<rect x="1725" y="1005" width="1" height="23" fill="#5e5e5e"/>
<rect x="1748" y="1005" width="1" height="23" fill="#3a3a3a"/>
<rect x="1749" y="1005" width="1" height="23" fill="#5e5e5e"/>
<rect x="1791" y="1005" width="1" height="23" fill="#3a3a3a"/>
<rect x="1792" y="1005" width="1" height="23" fill="#5e5e5e"/>
<rect x="1815" y="1005" width="1" height="23" fill="#3a3a3a"/>
<rect x="1816" y="1005" width="1" height="23" fill="#5e5e5e"/>
<rect x="1868" y="1005" width="1" height="23" fill="#3a3a3a"/>
<rect x="1869" y="1005" width="1" height="23" fill="#5e5e5e"/>
<rect x="997.5" y="1006" width="22.5" height="22.5" fill="#5b8bc4"/>
<rect x="1022.5" y="1006" width="22.5" height="22.5" fill="#5b8bc4"/>
<rect x="1126" y="1006" width="22" height="22.5" fill="#5b8bc4"/>
<rect x="1150" y="1006" width="22.5" height="22.5" fill="#5b8bc4"/>
<rect x="1214.5" y="1006" width="22.0" height="22.5" fill="#5b8bc4"/>
<rect x="1307" y="1006" width="22" height="22.5" fill="#5b8bc4"/>
<rect x="1370" y="1006" width="22" height="22.5" fill="#5b8bc4"/>
<rect x="1412" y="1006" width="22" height="22.5" fill="#5b8bc4"/>
<rect x="1820" y="1006" width="21" height="22.5" fill="#5b8bc4"/>
<path d="M957.325 1015.425 h7.3500000000000005 l-3.6750000000000003 4.2 z" fill="#f0f0f0"/>
<path d="M1073.325 1015.425 h7.3500000000000005 l-3.6750000000000003 4.2 z" fill="#f0f0f0"/>
<path d="M1112.325 1015.425 h7.3500000000000005 l-3.6750000000000003 4.2 z" fill="#f0f0f0"/>
<path d="M1176.325 1015.425 h7.3500000000000005 l-3.6750000000000003 4.2 z" fill="#f0f0f0"/>
<path d="M1290.325 1015.425 h7.3500000000000005 l-3.6750000000000003 4.2 z" fill="#f0f0f0"/>
<path d="M1357.325 1015.425 h7.3500000000000005 l-3.6750000000000003 4.2 z" fill="#f0f0f0"/>
<path d="M1396.325 1015.425 h7.3500000000000005 l-3.6750000000000003 4.2 z" fill="#f0f0f0"/>
<path d="M1545.325 1015.425 h7.3500000000000005 l-3.6750000000000003 4.2 z" fill="#f0f0f0"/>
<path d="M1586.325 1015.425 h7.3500000000000005 l-3.6750000000000003 4.2 z" fill="#f0f0f0"/>
<path d="M1711.325 1015.425 h7.3500000000000005 l-3.6750000000000003 4.2 z" fill="#f0f0f0"/>
<path d="M1778.325 1015.425 h7.3500000000000005 l-3.6750000000000003 4.2 z" fill="#f0f0f0"/>
<path d="M910 1012.500 h15 M910 1019.500 h15 M914 1008 v16 M921 1008 v16" stroke="#e6e6e6" stroke-width="1.300"/>
<rect x="936" y="1009.5" width="1.8" height="1.8" fill="#e6e6e6"/>
<rect x="936" y="1015.5" width="1.8" height="1.8" fill="#e6e6e6"/>
<rect x="936" y="1021.5" width="1.8" height="1.8" fill="#e6e6e6"/>
<rect x="942" y="1009.5" width="1.8" height="1.8" fill="#e6e6e6"/>
<rect x="942" y="1015.5" width="1.8" height="1.8" fill="#e6e6e6"/>
<rect x="942" y="1021.5" width="1.8" height="1.8" fill="#e6e6e6"/>
<rect x="948" y="1009.5" width="1.8" height="1.8" fill="#e6e6e6"/>
<rect x="948" y="1015.5" width="1.8" height="1.8" fill="#e6e6e6"/>
<rect x="948" y="1021.5" width="1.8" height="1.8" fill="#e6e6e6"/>
<path d="M978 1020 v-9 h12" stroke="#e6e6e6" stroke-width="1.300" fill="none"/>
<rect x="976" y="1018" width="7" height="6" fill="#e6e6e6"/>
<rect x="984.5" y="1008.5" width="6" height="6" fill="none" stroke="#e6e6e6" stroke-width="1.2"/>
<path d="M1002 1013 h7 M1005.500 1009.500 v7" stroke="#fff" stroke-width="1.500"/>
<rect x="1008" y="1018" width="9" height="4.5" fill="#fff"/>
<path d="M1027.500 1009 v14 h14" stroke="#fff" stroke-width="1.500" fill="none"/><path d="M1027.500 1017 h5 v6" stroke="#fff" fill="none"/>
<circle cx="1056" cy="1018" r="6.500" stroke="#e6e6e6" fill="none" stroke-width="1.300"/><path d="M1056 1018 h12 M1056 1018 l8 -8" stroke="#e6e6e6" stroke-width="1.200"/>
<path d="M1097 1008 v18" stroke="#6fd06f" stroke-width="1.300"/><path d="M1090 1010 l13 14" stroke="#e6e6e6" stroke-width="1.200"/><path d="M1092 1022 l9 -9" stroke="#e08050" stroke-width="1"/>
<path d="M1129 1024.500 h17 M1131 1023 l12 -12" stroke="#fff" stroke-width="1.500"/><path d="M1137 1024 a6 6 0 0 0 -2 -5" stroke="#fff" fill="none"/>
<rect x="1155.5" y="1011.5" width="13" height="12" fill="none" stroke="#fff" stroke-width="1.4"/>
<rect x="1153.5" y="1009.5" width="4" height="4" fill="#5b8bc4" stroke="#fff" stroke-width="1"/>
<path d="M1193 1010 h15 M1193 1015 h9 M1193 1020 h13 M1193 1024.500 h7" stroke="#e6e6e6" stroke-width="2"/>
<rect x="1219" y="1010" width="14" height="14" fill="#e8e8e8"/>
<rect x="1219.5" y="1010.5" width="3" height="3" fill="#4a6fa0"/>
<rect x="1219.5" y="1017.3" width="3" height="3" fill="#4a6fa0"/>
<rect x="1222.9" y="1013.9" width="3" height="3" fill="#4a6fa0"/>
<rect x="1222.9" y="1020.7" width="3" height="3" fill="#4a6fa0"/>
<rect x="1226.3" y="1010.5" width="3" height="3" fill="#4a6fa0"/>
<rect x="1226.3" y="1017.3" width="3" height="3" fill="#4a6fa0"/>
<rect x="1229.7" y="1013.9" width="3" height="3" fill="#4a6fa0"/>
<rect x="1229.7" y="1020.7" width="3" height="3" fill="#4a6fa0"/>
<rect x="1247" y="1014" width="11" height="11" fill="#8fd0a8" stroke="#ddd" stroke-width="1"/>
<path d="M1243 1011 h6 M1246 1008 v6" stroke="#e6e6e6" stroke-width="1.200"/>
<path d="M1270 1013 h10 v10 h-10 z M1270 1013 l4 -4 h10 v10 l-4 4 M1280 1013 l4 -4" stroke="#e6e6e6" fill="none" stroke-width="1.200"/>
<rect x="1267.5" y="1020.5" width="3.5" height="3.5" fill="none" stroke="#e0a050" stroke-width="1"/>
<path d="M1312 1008 v16 h14 M1309.500 1011 l2.500 -3 l2.500 3 M1323 1021.500 l3 2.500 l-3 2.500" stroke="#fff" stroke-width="1.400" fill="none"/><path d="M1320 1009 l-3 5 h3 l-2 4" stroke="#fff" fill="none" stroke-width="1.300"/>
<path d="M1336 1013 h11 v11 h-11 z" stroke="#e6e6e6" fill="none" stroke-width="1.200" stroke-dasharray="4 2"/><path d="M1336 1013 l4 -4 h10 v10 l-3 4" stroke="#e6e6e6" fill="none" stroke-width="1"/>
<rect x="1334.5" y="1011.5" width="3" height="3" fill="#6cb6f0"/>
<rect x="1345.5" y="1011.5" width="3" height="3" fill="#6cb6f0"/>
<rect x="1334.5" y="1022.5" width="3" height="3" fill="#6cb6f0"/>
<rect x="1345.5" y="1022.5" width="3" height="3" fill="#6cb6f0"/>
<path d="M1381 1009 l7 4 v8 l-7 4 l-7 -4 v-8 z M1381 1017 v-8 M1381 1017 l-7 4 M1381 1017 l7 4" stroke="#fff" fill="none" stroke-width="1.200"/>
<circle cx="1381" cy="1009" r="1.600" fill="#5b8bc4" stroke="#fff" stroke-width=".8"/>
<circle cx="1381" cy="1017" r="1.600" fill="#5b8bc4" stroke="#fff" stroke-width=".8"/>
<circle cx="1374" cy="1021" r="1.600" fill="#5b8bc4" stroke="#fff" stroke-width=".8"/>
<circle cx="1388" cy="1021" r="1.600" fill="#5b8bc4" stroke="#fff" stroke-width=".8"/>
<path d="M1422 1007.500 l2.500 8.500 l5 8 l-5.500 -3 l-2 -1 l-2 1 l-5.500 3 l5 -8 z" fill="#fff"/>
<circle cx="1430" cy="1010.500" r="2.200" fill="none" stroke="#fff" stroke-width="1"/>
<path d="M1446 1007.500 l2.500 8.500 l5 8 l-5.500 -3 l-2 -1 l-2 1 l-5.500 3 l5 -8 z" fill="#c8c8c8"/>
<path d="M1453 1008 l-2.500 4 h2.500 l-2 3.500" stroke="#c8c8c8" fill="none" stroke-width="1.200"/>
<path d="M1471 1007.500 l2.500 8.500 l5 8 l-5.500 -3 l-2 -1 l-2 1 l-5.500 3 l5 -8 z" fill="#c8c8c8"/>
<text x="1488" y="1021" font-size="12.5" fill="#f4f4f4" textLength="52" lengthAdjust="spacingAndGlyphs">1:1 / 100%</text>
<circle cx="1570.500" cy="1016.500" r="5" fill="none" stroke="#e6e6e6" stroke-width="3.200"/><circle cx="1570.500" cy="1016.500" r="7.200" fill="none" stroke="#e6e6e6" stroke-width="2.600" stroke-dasharray="2.800 2.850"/>
<path d="M1604 1016.500 h15 M1611.500 1009 v15" stroke="#e6e6e6" stroke-width="1.600"/>
<path d="M1634.500 1008 h8 v17 h-8 z" fill="#e6e6e6"/><path d="M1638 1011 h4.500 M1639.500 1014 h3 M1638 1017 h4.500 M1639.500 1020 h3" stroke="#4d4d4d" stroke-width="1"/>
<text x="1655" y="1021" font-size="12.5" fill="#f4f4f4" textLength="43.5" lengthAdjust="spacingAndGlyphs">Decimal</text>
<rect x="1730.5" y="1009.5" width="11" height="14" fill="none" stroke="#e6e6e6" stroke-width="1.2"/>
<path d="M1733 1013 h1.500 M1736 1013 h3.500 M1733 1016.500 h1.500 M1736 1016.500 h3.500 M1733 1020 h1.500 M1736 1020 h3.500" stroke="#e6e6e6" stroke-width="1.200"/>
<path d="M1755.500 1020 v-10 h14 v4" stroke="#e6e6e6" fill="none" stroke-width="1.200"/><path d="M1755.500 1011 h14" stroke="#e6e6e6" stroke-width="2"/>
<rect x="1764" y="1019" width="6.5" height="5" fill="#e6e6e6"/>
<path d="M1769 1019 v-2 a2 2 0 0 1 4 0" stroke="#e6e6e6" fill="none" stroke-width="1.100"/>
<rect x="1796.5" y="1009.5" width="5" height="5" fill="none" stroke="#e6e6e6" stroke-width="1.2"/>
<circle cx="1808.500" cy="1015" r="2.800" fill="none" stroke="#e6e6e6" stroke-width="1.200"/><path d="M1802 1017.500 l3.500 6.500 h-7 z" fill="none" stroke="#e6e6e6" stroke-width="1.200"/>
<circle cx="1830.500" cy="1017" r="8" fill="#9cb4cc" stroke="#fff" stroke-width="1.400"/><path d="M1828 1021 l6 -7" stroke="#fff" stroke-width="1.600"/>
<rect x="1848.5" y="1009.5" width="11" height="13" fill="#e8c050"/>
<rect x="1848.5" y="1009.5" width="7" height="7" fill="#5aa7e6"/>
<path d="M1852 1007 v10 M1847 1012 h10" stroke="#fff" stroke-width="1"/><path d="M1856 1021 l2.500 2.500 l4 -5" stroke="#30b040" stroke-width="1.800" fill="none"/>
<rect x="1874.5" y="1010.5" width="15" height="12" fill="none" stroke="#e6e6e6" stroke-width="1.2"/>
<path d="M1878 1019.500 l3 -3 M1878 1019.500 v-3 M1878 1019.500 h3 M1886 1013.500 l-3 3 M1886 1013.500 v3 M1886 1013.500 h-3" stroke="#e6e6e6" stroke-width="1" fill="none"/>
<path d="M1898 1010.500 h15 M1898 1016.500 h15 M1898 1022.500 h15" stroke="#e6e6e6" stroke-width="2"/>
</g>
</svg>
</div>
</body></html>
